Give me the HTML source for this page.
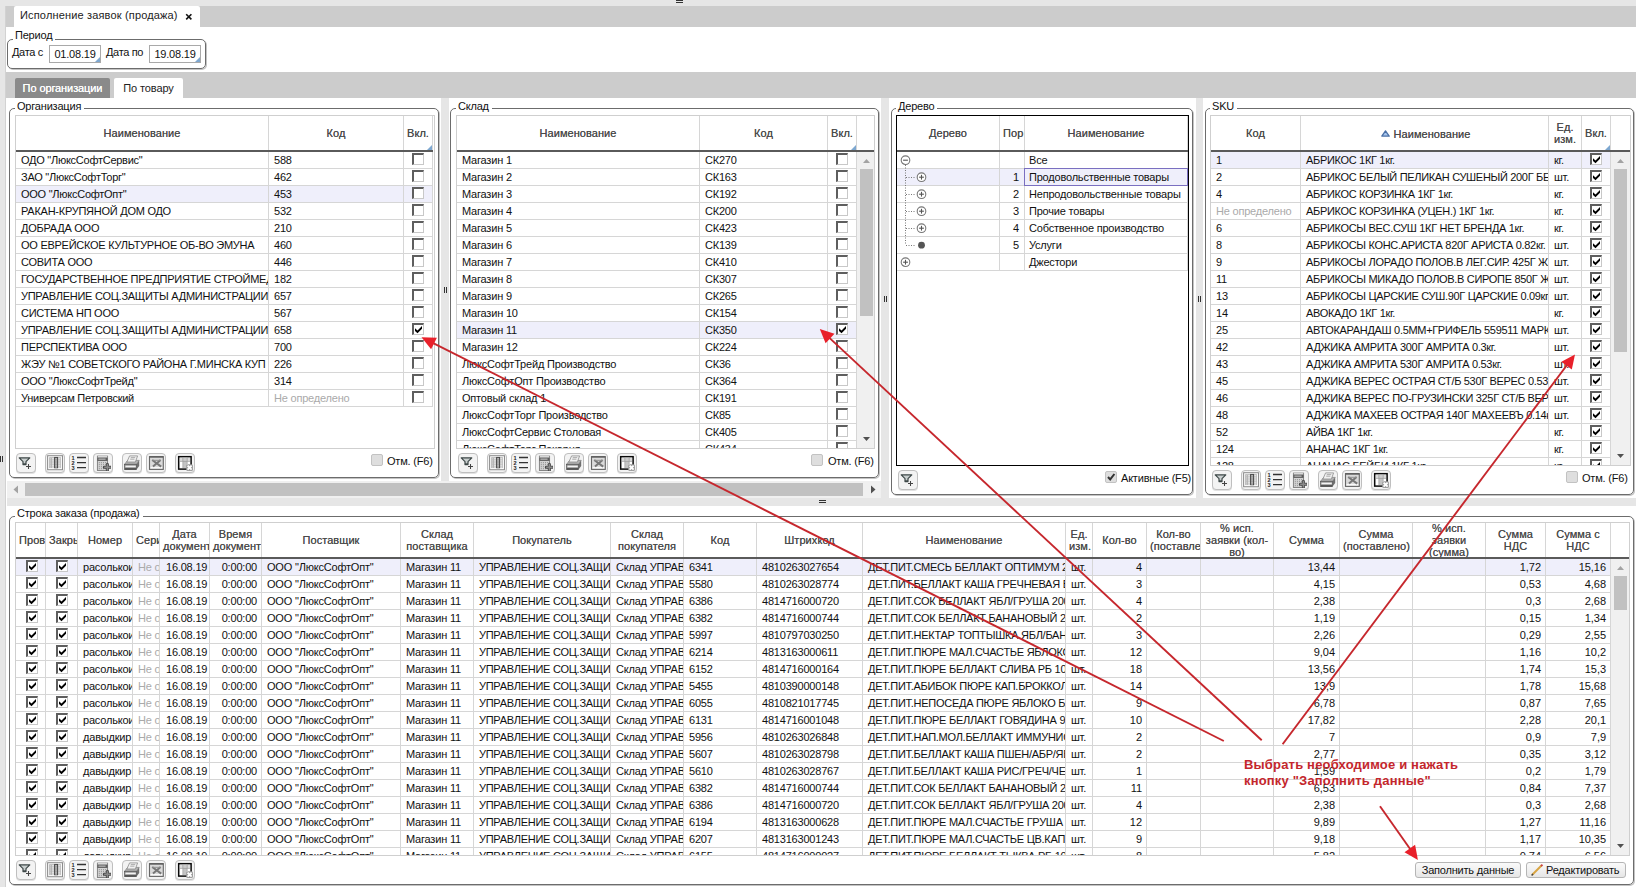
<!DOCTYPE html>
<html lang="ru"><head><meta charset="utf-8"><title>Исполнение заявок (продажа)</title>
<style>
*{box-sizing:border-box;margin:0;padding:0}
html,body{width:1636px;height:887px;overflow:hidden;background:#fff}
body{position:relative;font-family:"Liberation Sans",Arial,sans-serif;font-size:11px;color:#111;line-height:16px}
.a{position:absolute}
.fs{position:absolute;border:1px solid #6c6c6c;border-radius:5px;box-shadow:1px 1px 0 #c4c4c4}
.lg{position:absolute;background:#fff;padding:0 3px 0 2px;white-space:nowrap;line-height:14px;letter-spacing:-0.2px;color:#111}
.tb{position:absolute;border:1px solid #cfcfcf;overflow:hidden;background:#fff}
.hd{position:absolute;left:0;top:0;right:0;height:36px;border-bottom:2px solid #5a5a5a;background:#fff}
.hc{position:absolute;top:0;height:34px;border-right:1px solid #d6d6d6;color:#4a4a4a;text-align:center;display:flex;align-items:center;padding:0 3px;overflow:hidden;white-space:normal;line-height:12px;letter-spacing:0.06px;text-shadow:0 0 0.4px #666}
.hc>span{display:block;width:100%;flex:none;text-align:center}
.r{position:absolute;left:0;height:17px;border-bottom:1px solid #d6d6d6}
.r.s{background:#efeffb}
.c{position:absolute;top:0;height:16px;border-right:1px solid #d6d6d6;overflow:hidden;white-space:nowrap;padding:0 0 0 5px;letter-spacing:-0.2px;line-height:17px}
.c.n{text-align:right;padding:0 4px 0 0;letter-spacing:-0.05px}
.c.g{color:#aaa}
.cb{position:absolute;top:2px;width:12px;height:12px;background:#fff;border-top:2px solid #5e5e5e;border-left:2px solid #5e5e5e;border-right:1px solid #c8c8c8;border-bottom:1px solid #c8c8c8}
.cb svg{position:absolute;left:-1px;top:-1px;width:10px;height:10px}
.btn{position:absolute;width:20px;height:20px;border:1px solid #bfbfbf;border-radius:4px;background:#f3f3f3;box-shadow:0 1px 0 #e2e2e2}
.btn svg{position:absolute;left:1px;top:1px;width:16px;height:16px}
.rc{position:absolute;width:12px;height:12px;border:1px solid #c2c2c2;border-radius:2px;background:#dedede}
.vs{position:absolute;background:#f0f0f0}
.th{position:absolute;background:#c1c1c1}
</style></head>
<body>
<div class="a" style="left:0;top:0;width:1636px;height:6px;background:#e6e6e6"></div>
<div class="a" style="left:0;top:6px;width:6px;height:881px;background:#e6e6e6;border-right:1px solid #d2d2d2"></div>
<div class="a" style="left:6px;top:6px;width:1630px;height:21px;background:#cccccc"></div>
<div class="a" style="left:6px;top:72px;width:1630px;height:26px;background:#cccccc"></div>
<div class="a" style="left:676px;top:0;width:7px;height:1px;background:#333"></div><div class="a" style="left:676px;top:2px;width:7px;height:1px;background:#333"></div>
<div class="a" style="left:14px;top:6px;width:186px;height:21px;background:#fff;border-radius:2px 2px 0 0"></div>
<div class="a" style="left:20px;top:7px;white-space:nowrap;line-height:16px;font-size:11px;letter-spacing:0.16px;color:#222">Исполнение заявок (продажа)</div>
<svg class="a" style="left:185px;top:13px" width="8" height="8" viewBox="0 0 8 8"><path d="M1.2 1.2L6.4 6.4M6.4 1.2L1.2 6.4" stroke="#111" stroke-width="1.6"/></svg>
<div class="fs" style="left:7px;top:39px;width:199px;height:30px"></div>
<div class="lg" style="left:13px;top:28px">Период</div>
<div class="a" style="left:12px;top:44px;white-space:nowrap;letter-spacing:-0.35px">Дата с</div>
<div class="a" style="left:106px;top:44px;white-space:nowrap;letter-spacing:-0.35px">Дата по</div>
<div class="a" style="left:49px;top:45px;width:52px;height:18px;border:1px solid #a9a9a9;background:#fff;text-align:center;line-height:16px;letter-spacing:-0.2px">01.08.19<svg class="a" style="right:0;bottom:0" width="5" height="5" viewBox="0 0 5 5"><path d="M5 0V5H0Z" fill="#7da7d0"/></svg></div>
<div class="a" style="left:149px;top:45px;width:52px;height:18px;border:1px solid #a9a9a9;background:#fff;text-align:center;line-height:16px;letter-spacing:-0.2px">19.08.19<svg class="a" style="right:0;bottom:0" width="5" height="5" viewBox="0 0 5 5"><path d="M5 0V5H0Z" fill="#7da7d0"/></svg></div>
<div class="a" style="left:15px;top:78px;width:95px;height:20px;background:#8a8a8a;border-radius:2px 2px 0 0;color:#fff;text-align:center;line-height:20px;letter-spacing:-0.1px;text-shadow:0 0 0.5px #fff">По организации</div>
<div class="a" style="left:114px;top:78px;width:69px;height:20px;background:#fff;border-radius:2px 2px 0 0;color:#222;text-align:center;line-height:20px;letter-spacing:-0.1px">По товару</div>
<div class="a" style="left:441px;top:98px;width:8px;height:383px;background:#e6e6e6"></div>
<div class="a" style="left:881px;top:98px;width:8px;height:400px;background:#e6e6e6"></div>
<div class="a" style="left:1196px;top:98px;width:7px;height:400px;background:#e6e6e6"></div>
<div class="a" style="left:7px;top:498px;width:1629px;height:8px;background:#e6e6e6"></div>
<div class="a" style="left:0px;top:456px;width:1px;height:6px;background:#333"></div><div class="a" style="left:2px;top:456px;width:1px;height:6px;background:#333"></div>
<div class="a" style="left:444px;top:287px;width:1px;height:6px;background:#333"></div><div class="a" style="left:446px;top:287px;width:1px;height:6px;background:#333"></div>
<div class="a" style="left:884px;top:296px;width:1px;height:6px;background:#333"></div><div class="a" style="left:886px;top:296px;width:1px;height:6px;background:#333"></div>
<div class="a" style="left:1198px;top:296px;width:1px;height:6px;background:#333"></div><div class="a" style="left:1200px;top:296px;width:1px;height:6px;background:#333"></div>
<div class="a" style="left:819px;top:500px;width:7px;height:1px;background:#333"></div><div class="a" style="left:819px;top:502px;width:7px;height:1px;background:#333"></div>
<div class="a" style="left:7px;top:481px;width:874px;height:17px;background:#f0f0f0"></div>
<div class="a" style="left:25px;top:483px;width:838px;height:13px;background:#c1c1c1"></div>
<svg class="a" style="left:13px;top:485px" width="6" height="9" viewBox="0 0 6 9"><path d="M5 0.5V8.5L0.5 4.5Z" fill="#a3a3a3"/></svg>
<svg class="a" style="left:870px;top:485px" width="6" height="9" viewBox="0 0 6 9"><path d="M1 0.5V8.5L5.5 4.5Z" fill="#505050"/></svg>
<div class="fs" style="left:9px;top:108px;width:430px;height:370px"></div>
<div class="lg" style="left:15px;top:99px">Организация</div>
<div class="tb" style="left:15px;top:115px;width:420px;height:334px;border-color:#cfcfcf"><div class="hd" style="height:36px;right:auto;width:417px;"><div class="hc" style="left:0px;width:253px;height:34px;"><span>Наименование</span></div><div class="hc" style="left:253px;width:135px;height:34px;"><span>Код</span></div><div class="hc" style="left:388px;width:29px;height:34px;"><span>Вкл.</span><svg class="a" style="right:0;bottom:0" width="5" height="5" viewBox="0 0 5 5"><path d="M5 0V5H0Z" fill="#7da7d0"/></svg></div></div><div class="r" style="top:36px;width:417px"><div class="c" style="left:0px;width:253px;letter-spacing:-0.26px">ОДО "ЛюксСофтСервис"</div><div class="c" style="left:253px;width:135px;">588</div><div class="c" style="left:388px;width:29px;padding:0"><div class="cb" style="left:8px;top:1px"></div></div></div><div class="r" style="top:53px;width:417px"><div class="c" style="left:0px;width:253px;letter-spacing:-0.26px">ЗАО "ЛюксСофтТорг"</div><div class="c" style="left:253px;width:135px;">462</div><div class="c" style="left:388px;width:29px;padding:0"><div class="cb" style="left:8px;top:1px"></div></div></div><div class="r s" style="top:70px;width:417px"><div class="c" style="left:0px;width:253px;letter-spacing:-0.26px">ООО "ЛюксСофтОпт"</div><div class="c" style="left:253px;width:135px;">453</div><div class="c" style="left:388px;width:29px;padding:0"><div class="cb" style="left:8px;top:1px"></div></div></div><div class="r" style="top:87px;width:417px"><div class="c" style="left:0px;width:253px;letter-spacing:-0.26px">РАКАН-КРУПЯНОЙ ДОМ ОДО</div><div class="c" style="left:253px;width:135px;">532</div><div class="c" style="left:388px;width:29px;padding:0"><div class="cb" style="left:8px;top:1px"></div></div></div><div class="r" style="top:104px;width:417px"><div class="c" style="left:0px;width:253px;letter-spacing:-0.26px">ДОБРАДА ООО</div><div class="c" style="left:253px;width:135px;">210</div><div class="c" style="left:388px;width:29px;padding:0"><div class="cb" style="left:8px;top:1px"></div></div></div><div class="r" style="top:121px;width:417px"><div class="c" style="left:0px;width:253px;letter-spacing:-0.26px">ОО ЕВРЕЙСКОЕ КУЛЬТУРНОЕ ОБ-ВО ЭМУНА</div><div class="c" style="left:253px;width:135px;">460</div><div class="c" style="left:388px;width:29px;padding:0"><div class="cb" style="left:8px;top:1px"></div></div></div><div class="r" style="top:138px;width:417px"><div class="c" style="left:0px;width:253px;letter-spacing:-0.26px">СОВИТА ООО</div><div class="c" style="left:253px;width:135px;">446</div><div class="c" style="left:388px;width:29px;padding:0"><div class="cb" style="left:8px;top:1px"></div></div></div><div class="r" style="top:155px;width:417px"><div class="c" style="left:0px;width:253px;letter-spacing:-0.26px">ГОСУДАРСТВЕННОЕ ПРЕДПРИЯТИЕ СТРОЙМЕДИАПРОЕКТ</div><div class="c" style="left:253px;width:135px;">182</div><div class="c" style="left:388px;width:29px;padding:0"><div class="cb" style="left:8px;top:1px"></div></div></div><div class="r" style="top:172px;width:417px"><div class="c" style="left:0px;width:253px;letter-spacing:-0.26px">УПРАВЛЕНИЕ СОЦ.ЗАЩИТЫ АДМИНИСТРАЦИИ ЛЕНИНСКОГО РАЙОНА</div><div class="c" style="left:253px;width:135px;">657</div><div class="c" style="left:388px;width:29px;padding:0"><div class="cb" style="left:8px;top:1px"></div></div></div><div class="r" style="top:189px;width:417px"><div class="c" style="left:0px;width:253px;letter-spacing:-0.26px">СИСТЕМА НП ООО</div><div class="c" style="left:253px;width:135px;">567</div><div class="c" style="left:388px;width:29px;padding:0"><div class="cb" style="left:8px;top:1px"></div></div></div><div class="r" style="top:206px;width:417px"><div class="c" style="left:0px;width:253px;letter-spacing:-0.26px">УПРАВЛЕНИЕ СОЦ.ЗАЩИТЫ АДМИНИСТРАЦИИ СОВЕТСКОГО РАЙОНА</div><div class="c" style="left:253px;width:135px;">658</div><div class="c" style="left:388px;width:29px;padding:0"><div class="cb" style="left:8px;top:1px"><svg viewBox="0 0 10 10"><path d="M2 4.2L4.5 6.6L9 2V4.8L4.5 9.3L2 6.9Z" fill="#000"/></svg></div></div></div><div class="r" style="top:223px;width:417px"><div class="c" style="left:0px;width:253px;letter-spacing:-0.26px">ПЕРСПЕКТИВА ООО</div><div class="c" style="left:253px;width:135px;">700</div><div class="c" style="left:388px;width:29px;padding:0"><div class="cb" style="left:8px;top:1px"></div></div></div><div class="r" style="top:240px;width:417px"><div class="c" style="left:0px;width:253px;letter-spacing:-0.26px">ЖЭУ №1 СОВЕТСКОГО РАЙОНА Г.МИНСКА КУП</div><div class="c" style="left:253px;width:135px;">226</div><div class="c" style="left:388px;width:29px;padding:0"><div class="cb" style="left:8px;top:1px"></div></div></div><div class="r" style="top:257px;width:417px"><div class="c" style="left:0px;width:253px;letter-spacing:-0.26px">ООО "ЛюксСофтТрейд"</div><div class="c" style="left:253px;width:135px;">314</div><div class="c" style="left:388px;width:29px;padding:0"><div class="cb" style="left:8px;top:1px"></div></div></div><div class="r" style="top:274px;width:417px"><div class="c" style="left:0px;width:253px;letter-spacing:-0.26px">Универсам Петровский</div><div class="c g" style="left:253px;width:135px;">Не определено</div><div class="c" style="left:388px;width:29px;padding:0"><div class="cb" style="left:8px;top:1px"></div></div></div></div>
<div class="btn" style="left:16px;top:453px"><svg viewBox="0 0 16 16"><path d="M1.2 2.9H11.8L8 6.6V9.6H5V6.6Z" fill="#c9cfcf" stroke="#3d4747" stroke-width="1.2" stroke-linejoin="round"/><path d="M5 8.3H8V9.9H5Z" fill="#3d4747"/><path d="M10.5 9V13.9M8 11.45H13" stroke="#444" stroke-width="1.05"/></svg></div><div class="btn" style="left:45px;top:453px"><svg viewBox="0 0 16 16"><rect x=".6" y=".7" width="14.9" height="14" fill="#f8f8f8" stroke="#8c8c8c" stroke-width="1"/><rect x="2.2" y="2.2" width="11.7" height="10.8" fill="#b2b2b2"/><rect x="7.6" y="2.4" width="3" height="10.4" fill="#8c8c8c" stroke="#454545" stroke-width=".9"/><rect x="3" y="3.3" width="1.2" height="1.1" fill="#d8d8d8"/><rect x="5" y="3.3" width="2" height="1.1" fill="#f4f4f4"/><rect x="8.3" y="3.3" width="1.6" height="1.1" fill="#c9c9c9"/><rect x="11.3" y="3.3" width="2" height="1.1" fill="#f4f4f4"/><rect x="3" y="5.4" width="1.2" height="1.1" fill="#d8d8d8"/><rect x="5" y="5.4" width="2" height="1.1" fill="#f4f4f4"/><rect x="8.3" y="5.4" width="1.6" height="1.1" fill="#c9c9c9"/><rect x="11.3" y="5.4" width="2" height="1.1" fill="#f4f4f4"/><rect x="3" y="7.5" width="1.2" height="1.1" fill="#d8d8d8"/><rect x="5" y="7.5" width="2" height="1.1" fill="#f4f4f4"/><rect x="8.3" y="7.5" width="1.6" height="1.1" fill="#c9c9c9"/><rect x="11.3" y="7.5" width="2" height="1.1" fill="#f4f4f4"/><rect x="3" y="9.6" width="1.2" height="1.1" fill="#d8d8d8"/><rect x="5" y="9.6" width="2" height="1.1" fill="#f4f4f4"/><rect x="8.3" y="9.6" width="1.6" height="1.1" fill="#c9c9c9"/><rect x="11.3" y="9.6" width="2" height="1.1" fill="#f4f4f4"/><rect x="3" y="11.5" width="1.2" height="1.1" fill="#d8d8d8"/><rect x="5" y="11.5" width="2" height="1.1" fill="#f4f4f4"/><rect x="8.3" y="11.5" width="1.6" height="1.1" fill="#c9c9c9"/><rect x="11.3" y="11.5" width="2" height="1.1" fill="#f4f4f4"/></svg></div><div class="btn" style="left:69px;top:453px"><svg viewBox="0 0 16 16"><path d="M6 2.5H15M6 7.6H15M6 12.6H15" stroke="#333" stroke-width="1.3"/><text x="0.6" y="4.8" font-family="Liberation Sans,sans-serif" font-size="5.6" font-weight="bold" fill="#222">1</text><text x="0.6" y="9.9" font-family="Liberation Sans,sans-serif" font-size="5.6" font-weight="bold" fill="#222">2</text><text x="0.6" y="15" font-family="Liberation Sans,sans-serif" font-size="5.6" font-weight="bold" fill="#222">3</text></svg></div><div class="btn" style="left:93px;top:453px"><svg viewBox="0 0 16 16"><rect x="2.4" y="1.1" width="10.2" height="14.4" fill="#d4d4d4" stroke="#7a7a7a" stroke-width=".9"/><rect x="2.8" y="1.4" width="9.4" height="1.1" fill="#fbfbfb"/><rect x="2.4" y="2.5" width="10.2" height="3.4" fill="#5c5c5c"/><rect x="3.4" y="3.4" width="7.2" height="1.6" fill="#a4a4a4"/><rect x="3.8" y="7.2" width="1" height="1" fill="#8a8a8a"/><rect x="5.9" y="7.2" width="1" height="1" fill="#8a8a8a"/><rect x="8" y="7.2" width="1" height="1" fill="#8a8a8a"/><rect x="10.1" y="7.2" width="1" height="1" fill="#8a8a8a"/><rect x="3.8" y="9.2" width="1" height="1" fill="#8a8a8a"/><rect x="5.9" y="9.2" width="1" height="1" fill="#8a8a8a"/><rect x="8" y="9.2" width="1" height="1" fill="#8a8a8a"/><rect x="10.1" y="9.2" width="1" height="1" fill="#8a8a8a"/><rect x="3.8" y="11.2" width="1" height="1" fill="#8a8a8a"/><rect x="5.9" y="11.2" width="1" height="1" fill="#8a8a8a"/><rect x="8" y="11.2" width="1" height="1" fill="#8a8a8a"/><rect x="10.1" y="11.2" width="1" height="1" fill="#8a8a8a"/><rect x="3.8" y="13.2" width="1" height="1" fill="#8a8a8a"/><rect x="5.9" y="13.2" width="1" height="1" fill="#8a8a8a"/><rect x="8" y="13.2" width="1" height="1" fill="#8a8a8a"/><rect x="10.1" y="13.2" width="1" height="1" fill="#8a8a8a"/><path d="M12.4 9.2V15.4M9.3 12.3H15.5" stroke="#474747" stroke-width="3" stroke-linecap="round"/><path d="M12.4 9.6V15M9.7 12.3H15.1" stroke="#8a8a8a" stroke-width="1.5" stroke-linecap="round"/></svg></div><div class="btn" style="left:122px;top:453px"><svg viewBox="0 0 16 16"><path d="M.6 9.3L3.6 5.4H15.2L12.6 9.3Z" fill="#b3b3b3" stroke="#7c7c7c" stroke-width=".7"/><path d="M12.6 9.3L15.2 5.4V11L12.6 14.6Z" fill="#6f6f6f"/><rect x=".6" y="9.3" width="12" height="5.3" fill="#8b8b8b" stroke="#555" stroke-width=".7"/><rect x="1.4" y="10.6" width="10.4" height="1.7" fill="#f3f3f3"/><rect x=".9" y="13.2" width="11.4" height="1.4" fill="#4a4a4a"/><path d="M5.6 .9H13.6L11.4 7H2.9Z" fill="#f1f1f1" stroke="#8d8d8d" stroke-width=".8"/><path d="M6.8 2.6H11.2M6.2 4.2H10.4" stroke="#a4a4a4" stroke-width=".9"/></svg></div><div class="btn" style="left:146px;top:453px"><svg viewBox="0 0 16 16"><rect x="1.5" y="1.6" width="13.8" height="12.8" fill="#dadada" stroke="#666" stroke-width="1.1"/><path d="M1.5 2H15.3" stroke="#5a5a5a" stroke-width="1.3"/><rect x="2.6" y="12" width="11.6" height="1.4" fill="#fafafa"/><path d="M4.2 5L13.2 11.6M12.6 5L5 11.6" stroke="#777" stroke-width="2"/><path d="M4.5 5.3H13" stroke="#8f8f8f" stroke-width="1"/></svg></div><div class="btn" style="left:175px;top:453px"><svg viewBox="0 0 16 16"><rect x="1.7" y="1.7" width="12.4" height="12.4" fill="#fff" stroke="#0a0a0a" stroke-width="1.5"/><rect x="6" y="2.8" width="4" height="10.2" fill="#c4c4c4"/><rect x="2.8" y="2.8" width="10.2" height="3.4" fill="#cfcfcf" opacity=".75"/><path d="M5.8 2.8V13M10.2 2.8V9M2.8 6.4H13" stroke="#9a9a9a" stroke-width=".7"/><rect x="9.2" y="9.2" width="6.8" height="6.8" rx="1.6" fill="#9c9c9c"/><path d="M10.6 10.6L14.6 14.6M14.6 10.6L10.6 14.6" stroke="#fff" stroke-width="1.9"/></svg></div>
<div class="rc" style="left:371px;top:454px"></div><div class="a" style="left:387px;top:453px;white-space:nowrap;letter-spacing:-0.2px">Отм. (F6)</div>
<div class="fs" style="left:450px;top:108px;width:429px;height:370px"></div>
<div class="lg" style="left:456px;top:99px">Склад</div>
<div class="tb" style="left:456px;top:115px;width:419px;height:334px;border-color:#cfcfcf"><div class="hd" style="height:36px;"><div class="hc" style="left:0px;width:243px;height:34px;"><span>Наименование</span></div><div class="hc" style="left:243px;width:128px;height:34px;"><span>Код</span></div><div class="hc" style="left:371px;width:29px;height:34px;"><span>Вкл.</span><svg class="a" style="right:0;bottom:0" width="5" height="5" viewBox="0 0 5 5"><path d="M5 0V5H0Z" fill="#7da7d0"/></svg></div></div><div class="r" style="top:36px;width:400px"><div class="c" style="left:0px;width:243px;">Магазин 1</div><div class="c" style="left:243px;width:128px;">СК270</div><div class="c" style="left:371px;width:29px;padding:0"><div class="cb" style="left:8px;top:1px"></div></div></div><div class="r" style="top:53px;width:400px"><div class="c" style="left:0px;width:243px;">Магазин 2</div><div class="c" style="left:243px;width:128px;">СК163</div><div class="c" style="left:371px;width:29px;padding:0"><div class="cb" style="left:8px;top:1px"></div></div></div><div class="r" style="top:70px;width:400px"><div class="c" style="left:0px;width:243px;">Магазин 3</div><div class="c" style="left:243px;width:128px;">СК192</div><div class="c" style="left:371px;width:29px;padding:0"><div class="cb" style="left:8px;top:1px"></div></div></div><div class="r" style="top:87px;width:400px"><div class="c" style="left:0px;width:243px;">Магазин 4</div><div class="c" style="left:243px;width:128px;">СК200</div><div class="c" style="left:371px;width:29px;padding:0"><div class="cb" style="left:8px;top:1px"></div></div></div><div class="r" style="top:104px;width:400px"><div class="c" style="left:0px;width:243px;">Магазин 5</div><div class="c" style="left:243px;width:128px;">СК423</div><div class="c" style="left:371px;width:29px;padding:0"><div class="cb" style="left:8px;top:1px"></div></div></div><div class="r" style="top:121px;width:400px"><div class="c" style="left:0px;width:243px;">Магазин 6</div><div class="c" style="left:243px;width:128px;">СК139</div><div class="c" style="left:371px;width:29px;padding:0"><div class="cb" style="left:8px;top:1px"></div></div></div><div class="r" style="top:138px;width:400px"><div class="c" style="left:0px;width:243px;">Магазин 7</div><div class="c" style="left:243px;width:128px;">СК410</div><div class="c" style="left:371px;width:29px;padding:0"><div class="cb" style="left:8px;top:1px"></div></div></div><div class="r" style="top:155px;width:400px"><div class="c" style="left:0px;width:243px;">Магазин 8</div><div class="c" style="left:243px;width:128px;">СК307</div><div class="c" style="left:371px;width:29px;padding:0"><div class="cb" style="left:8px;top:1px"></div></div></div><div class="r" style="top:172px;width:400px"><div class="c" style="left:0px;width:243px;">Магазин 9</div><div class="c" style="left:243px;width:128px;">СК265</div><div class="c" style="left:371px;width:29px;padding:0"><div class="cb" style="left:8px;top:1px"></div></div></div><div class="r" style="top:189px;width:400px"><div class="c" style="left:0px;width:243px;">Магазин 10</div><div class="c" style="left:243px;width:128px;">СК154</div><div class="c" style="left:371px;width:29px;padding:0"><div class="cb" style="left:8px;top:1px"></div></div></div><div class="r s" style="top:206px;width:400px"><div class="c" style="left:0px;width:243px;">Магазин 11</div><div class="c" style="left:243px;width:128px;">СК350</div><div class="c" style="left:371px;width:29px;padding:0"><div class="cb" style="left:8px;top:1px"><svg viewBox="0 0 10 10"><path d="M2 4.2L4.5 6.6L9 2V4.8L4.5 9.3L2 6.9Z" fill="#000"/></svg></div></div></div><div class="r" style="top:223px;width:400px"><div class="c" style="left:0px;width:243px;">Магазин 12</div><div class="c" style="left:243px;width:128px;">СК224</div><div class="c" style="left:371px;width:29px;padding:0"><div class="cb" style="left:8px;top:1px"></div></div></div><div class="r" style="top:240px;width:400px"><div class="c" style="left:0px;width:243px;">ЛюксСофтТрейд Производство</div><div class="c" style="left:243px;width:128px;">СК36</div><div class="c" style="left:371px;width:29px;padding:0"><div class="cb" style="left:8px;top:1px"></div></div></div><div class="r" style="top:257px;width:400px"><div class="c" style="left:0px;width:243px;">ЛюксСофтОпт Производство</div><div class="c" style="left:243px;width:128px;">СК364</div><div class="c" style="left:371px;width:29px;padding:0"><div class="cb" style="left:8px;top:1px"></div></div></div><div class="r" style="top:274px;width:400px"><div class="c" style="left:0px;width:243px;">Оптовый склад 1</div><div class="c" style="left:243px;width:128px;">СК191</div><div class="c" style="left:371px;width:29px;padding:0"><div class="cb" style="left:8px;top:1px"></div></div></div><div class="r" style="top:291px;width:400px"><div class="c" style="left:0px;width:243px;">ЛюксСофтТорг Производство</div><div class="c" style="left:243px;width:128px;">СК85</div><div class="c" style="left:371px;width:29px;padding:0"><div class="cb" style="left:8px;top:1px"></div></div></div><div class="r" style="top:308px;width:400px"><div class="c" style="left:0px;width:243px;">ЛюксСофтСервис Столовая</div><div class="c" style="left:243px;width:128px;">СК405</div><div class="c" style="left:371px;width:29px;padding:0"><div class="cb" style="left:8px;top:1px"></div></div></div><div class="r" style="top:325px;width:400px"><div class="c" style="left:0px;width:243px;">ЛюксСофтТорг Пекарня</div><div class="c" style="left:243px;width:128px;">СК434</div><div class="c" style="left:371px;width:29px;padding:0"><div class="cb" style="left:8px;top:1px"></div></div></div><div class="vs" style="left:400px;top:36px;width:17px;bottom:0"></div><div class="th" style="left:403px;top:53px;width:13px;height:147px"></div><svg class="a" style="left:406px;top:43px" width="7" height="4" viewBox="0 0 7 4"><path d="M0 4H7L3.5 0Z" fill="#a3a3a3"/></svg><svg class="a" style="left:406px;top:321px" width="7" height="4" viewBox="0 0 7 4"><path d="M0 0H7L3.5 4Z" fill="#505050"/></svg></div>
<div class="btn" style="left:458px;top:453px"><svg viewBox="0 0 16 16"><path d="M1.2 2.9H11.8L8 6.6V9.6H5V6.6Z" fill="#c9cfcf" stroke="#3d4747" stroke-width="1.2" stroke-linejoin="round"/><path d="M5 8.3H8V9.9H5Z" fill="#3d4747"/><path d="M10.5 9V13.9M8 11.45H13" stroke="#444" stroke-width="1.05"/></svg></div><div class="btn" style="left:487px;top:453px"><svg viewBox="0 0 16 16"><rect x=".6" y=".7" width="14.9" height="14" fill="#f8f8f8" stroke="#8c8c8c" stroke-width="1"/><rect x="2.2" y="2.2" width="11.7" height="10.8" fill="#b2b2b2"/><rect x="7.6" y="2.4" width="3" height="10.4" fill="#8c8c8c" stroke="#454545" stroke-width=".9"/><rect x="3" y="3.3" width="1.2" height="1.1" fill="#d8d8d8"/><rect x="5" y="3.3" width="2" height="1.1" fill="#f4f4f4"/><rect x="8.3" y="3.3" width="1.6" height="1.1" fill="#c9c9c9"/><rect x="11.3" y="3.3" width="2" height="1.1" fill="#f4f4f4"/><rect x="3" y="5.4" width="1.2" height="1.1" fill="#d8d8d8"/><rect x="5" y="5.4" width="2" height="1.1" fill="#f4f4f4"/><rect x="8.3" y="5.4" width="1.6" height="1.1" fill="#c9c9c9"/><rect x="11.3" y="5.4" width="2" height="1.1" fill="#f4f4f4"/><rect x="3" y="7.5" width="1.2" height="1.1" fill="#d8d8d8"/><rect x="5" y="7.5" width="2" height="1.1" fill="#f4f4f4"/><rect x="8.3" y="7.5" width="1.6" height="1.1" fill="#c9c9c9"/><rect x="11.3" y="7.5" width="2" height="1.1" fill="#f4f4f4"/><rect x="3" y="9.6" width="1.2" height="1.1" fill="#d8d8d8"/><rect x="5" y="9.6" width="2" height="1.1" fill="#f4f4f4"/><rect x="8.3" y="9.6" width="1.6" height="1.1" fill="#c9c9c9"/><rect x="11.3" y="9.6" width="2" height="1.1" fill="#f4f4f4"/><rect x="3" y="11.5" width="1.2" height="1.1" fill="#d8d8d8"/><rect x="5" y="11.5" width="2" height="1.1" fill="#f4f4f4"/><rect x="8.3" y="11.5" width="1.6" height="1.1" fill="#c9c9c9"/><rect x="11.3" y="11.5" width="2" height="1.1" fill="#f4f4f4"/></svg></div><div class="btn" style="left:511px;top:453px"><svg viewBox="0 0 16 16"><path d="M6 2.5H15M6 7.6H15M6 12.6H15" stroke="#333" stroke-width="1.3"/><text x="0.6" y="4.8" font-family="Liberation Sans,sans-serif" font-size="5.6" font-weight="bold" fill="#222">1</text><text x="0.6" y="9.9" font-family="Liberation Sans,sans-serif" font-size="5.6" font-weight="bold" fill="#222">2</text><text x="0.6" y="15" font-family="Liberation Sans,sans-serif" font-size="5.6" font-weight="bold" fill="#222">3</text></svg></div><div class="btn" style="left:535px;top:453px"><svg viewBox="0 0 16 16"><rect x="2.4" y="1.1" width="10.2" height="14.4" fill="#d4d4d4" stroke="#7a7a7a" stroke-width=".9"/><rect x="2.8" y="1.4" width="9.4" height="1.1" fill="#fbfbfb"/><rect x="2.4" y="2.5" width="10.2" height="3.4" fill="#5c5c5c"/><rect x="3.4" y="3.4" width="7.2" height="1.6" fill="#a4a4a4"/><rect x="3.8" y="7.2" width="1" height="1" fill="#8a8a8a"/><rect x="5.9" y="7.2" width="1" height="1" fill="#8a8a8a"/><rect x="8" y="7.2" width="1" height="1" fill="#8a8a8a"/><rect x="10.1" y="7.2" width="1" height="1" fill="#8a8a8a"/><rect x="3.8" y="9.2" width="1" height="1" fill="#8a8a8a"/><rect x="5.9" y="9.2" width="1" height="1" fill="#8a8a8a"/><rect x="8" y="9.2" width="1" height="1" fill="#8a8a8a"/><rect x="10.1" y="9.2" width="1" height="1" fill="#8a8a8a"/><rect x="3.8" y="11.2" width="1" height="1" fill="#8a8a8a"/><rect x="5.9" y="11.2" width="1" height="1" fill="#8a8a8a"/><rect x="8" y="11.2" width="1" height="1" fill="#8a8a8a"/><rect x="10.1" y="11.2" width="1" height="1" fill="#8a8a8a"/><rect x="3.8" y="13.2" width="1" height="1" fill="#8a8a8a"/><rect x="5.9" y="13.2" width="1" height="1" fill="#8a8a8a"/><rect x="8" y="13.2" width="1" height="1" fill="#8a8a8a"/><rect x="10.1" y="13.2" width="1" height="1" fill="#8a8a8a"/><path d="M12.4 9.2V15.4M9.3 12.3H15.5" stroke="#474747" stroke-width="3" stroke-linecap="round"/><path d="M12.4 9.6V15M9.7 12.3H15.1" stroke="#8a8a8a" stroke-width="1.5" stroke-linecap="round"/></svg></div><div class="btn" style="left:564px;top:453px"><svg viewBox="0 0 16 16"><path d="M.6 9.3L3.6 5.4H15.2L12.6 9.3Z" fill="#b3b3b3" stroke="#7c7c7c" stroke-width=".7"/><path d="M12.6 9.3L15.2 5.4V11L12.6 14.6Z" fill="#6f6f6f"/><rect x=".6" y="9.3" width="12" height="5.3" fill="#8b8b8b" stroke="#555" stroke-width=".7"/><rect x="1.4" y="10.6" width="10.4" height="1.7" fill="#f3f3f3"/><rect x=".9" y="13.2" width="11.4" height="1.4" fill="#4a4a4a"/><path d="M5.6 .9H13.6L11.4 7H2.9Z" fill="#f1f1f1" stroke="#8d8d8d" stroke-width=".8"/><path d="M6.8 2.6H11.2M6.2 4.2H10.4" stroke="#a4a4a4" stroke-width=".9"/></svg></div><div class="btn" style="left:588px;top:453px"><svg viewBox="0 0 16 16"><rect x="1.5" y="1.6" width="13.8" height="12.8" fill="#dadada" stroke="#666" stroke-width="1.1"/><path d="M1.5 2H15.3" stroke="#5a5a5a" stroke-width="1.3"/><rect x="2.6" y="12" width="11.6" height="1.4" fill="#fafafa"/><path d="M4.2 5L13.2 11.6M12.6 5L5 11.6" stroke="#777" stroke-width="2"/><path d="M4.5 5.3H13" stroke="#8f8f8f" stroke-width="1"/></svg></div><div class="btn" style="left:617px;top:453px"><svg viewBox="0 0 16 16"><rect x="1.7" y="1.7" width="12.4" height="12.4" fill="#fff" stroke="#0a0a0a" stroke-width="1.5"/><rect x="6" y="2.8" width="4" height="10.2" fill="#c4c4c4"/><rect x="2.8" y="2.8" width="10.2" height="3.4" fill="#cfcfcf" opacity=".75"/><path d="M5.8 2.8V13M10.2 2.8V9M2.8 6.4H13" stroke="#9a9a9a" stroke-width=".7"/><rect x="9.2" y="9.2" width="6.8" height="6.8" rx="1.6" fill="#9c9c9c"/><path d="M10.6 10.6L14.6 14.6M14.6 10.6L10.6 14.6" stroke="#fff" stroke-width="1.9"/></svg></div>
<div class="rc" style="left:811px;top:454px"></div><div class="a" style="left:828px;top:453px;white-space:nowrap;letter-spacing:-0.2px">Отм. (F6)</div>
<div class="fs" style="left:891px;top:108px;width:302px;height:387px"></div>
<div class="lg" style="left:896px;top:99px">Дерево</div>
<div class="tb" style="left:896px;top:115px;width:293px;height:351px;border-color:#000"><div class="hd" style="height:36px;"><div class="hc" style="left:0px;width:103px;height:34px;"><span>Дерево</span></div><div class="hc" style="left:103px;width:25px;height:34px;"><span>Пор</span></div><div class="hc" style="left:128px;width:163px;height:34px;"><span>Наименование</span></div></div><div class="r" style="top:36px;width:291px"><div class="c" style="left:0px;width:103px;"></div><div class="c n" style="left:103px;width:25px;padding-right:5px"></div><div class="c" style="left:128px;width:163px;padding-left:4px">Все</div></div><div class="r s" style="top:53px;width:291px"><div class="c" style="left:0px;width:103px;"></div><div class="c x n" style="left:103px;width:25px;padding-right:5px">1</div><div class="c" style="left:128px;width:163px;padding-left:4px">Продовольственные товары</div></div><div class="r" style="top:70px;width:291px"><div class="c" style="left:0px;width:103px;"></div><div class="c n" style="left:103px;width:25px;padding-right:5px">2</div><div class="c" style="left:128px;width:163px;padding-left:4px">Непродовольственные товары</div></div><div class="r" style="top:87px;width:291px"><div class="c" style="left:0px;width:103px;"></div><div class="c n" style="left:103px;width:25px;padding-right:5px">3</div><div class="c" style="left:128px;width:163px;padding-left:4px">Прочие товары</div></div><div class="r" style="top:104px;width:291px"><div class="c" style="left:0px;width:103px;"></div><div class="c n" style="left:103px;width:25px;padding-right:5px">4</div><div class="c" style="left:128px;width:163px;padding-left:4px">Собственное производство</div></div><div class="r" style="top:121px;width:291px"><div class="c" style="left:0px;width:103px;"></div><div class="c n" style="left:103px;width:25px;padding-right:5px">5</div><div class="c" style="left:128px;width:163px;padding-left:4px">Услуги</div></div><div class="r" style="top:138px;width:291px"><div class="c" style="left:0px;width:103px;"></div><div class="c n" style="left:103px;width:25px;padding-right:5px"></div><div class="c" style="left:128px;width:163px;padding-left:4px">Джестори</div></div><svg class="a" style="left:0;top:36px;pointer-events:none" width="110" height="130" viewBox="0 0 110 130"><path d="M8.5 13V93" stroke="#777" stroke-width="1" stroke-dasharray="1 1.5"/><path d="M9 25.5H18" stroke="#777" stroke-width="1" stroke-dasharray="1 1.5"/><path d="M9 42.5H18" stroke="#777" stroke-width="1" stroke-dasharray="1 1.5"/><path d="M9 59.5H18" stroke="#777" stroke-width="1" stroke-dasharray="1 1.5"/><path d="M9 76.5H18" stroke="#777" stroke-width="1" stroke-dasharray="1 1.5"/><path d="M9 93.5H18" stroke="#777" stroke-width="1" stroke-dasharray="1 1.5"/><circle cx="8.5" cy="8.2" r="4.3" fill="#fff" stroke="#777" stroke-width="1.1"/><path d="M6.1 8.2H10.9" stroke="#555" stroke-width="1.1"/><circle cx="24.5" cy="25.2" r="4.3" fill="#fff" stroke="#777" stroke-width="1.1"/><path d="M22.1 25.2H26.9" stroke="#555" stroke-width="1.1"/><path d="M24.5 22.8V27.599999999999998" stroke="#555" stroke-width="1.1"/><circle cx="24.5" cy="42.2" r="4.3" fill="#fff" stroke="#777" stroke-width="1.1"/><path d="M22.1 42.2H26.9" stroke="#555" stroke-width="1.1"/><path d="M24.5 39.800000000000004V44.6" stroke="#555" stroke-width="1.1"/><circle cx="24.5" cy="59.2" r="4.3" fill="#fff" stroke="#777" stroke-width="1.1"/><path d="M22.1 59.2H26.9" stroke="#555" stroke-width="1.1"/><path d="M24.5 56.800000000000004V61.6" stroke="#555" stroke-width="1.1"/><circle cx="24.5" cy="76.2" r="4.3" fill="#fff" stroke="#777" stroke-width="1.1"/><path d="M22.1 76.2H26.9" stroke="#555" stroke-width="1.1"/><path d="M24.5 73.8V78.60000000000001" stroke="#555" stroke-width="1.1"/><circle cx="24.5" cy="93.2" r="3.4" fill="#555"/><circle cx="8.5" cy="110.2" r="4.3" fill="#fff" stroke="#777" stroke-width="1.1"/><path d="M6.1 110.2H10.9" stroke="#555" stroke-width="1.1"/><path d="M8.5 107.8V112.60000000000001" stroke="#555" stroke-width="1.1"/></svg><div class="a" style="left:127px;top:52px;width:164px;height:18px;border:1px solid #7a6fc0"></div></div>
<div class="btn" style="left:898px;top:470px"><svg viewBox="0 0 16 16"><path d="M1.2 2.9H11.8L8 6.6V9.6H5V6.6Z" fill="#c9cfcf" stroke="#3d4747" stroke-width="1.2" stroke-linejoin="round"/><path d="M5 8.3H8V9.9H5Z" fill="#3d4747"/><path d="M10.5 9V13.9M8 11.45H13" stroke="#444" stroke-width="1.05"/></svg></div>
<div class="rc" style="left:1105px;top:471px"><svg class="a" style="left:0;top:0" width="10" height="10" viewBox="0 0 10 10"><path d="M2 5L4.2 7.4L8.4 2" fill="none" stroke="#333" stroke-width="2"/></svg></div><div class="a" style="left:1121px;top:470px;white-space:nowrap;letter-spacing:-0.2px">Активные (F5)</div>
<div class="fs" style="left:1205px;top:108px;width:429px;height:387px"></div>
<div class="lg" style="left:1210px;top:99px">SKU</div>
<div class="tb" style="left:1210px;top:115px;width:421px;height:351px;border-color:#cfcfcf"><div class="hd" style="height:36px;"><div class="hc" style="left:0px;width:90px;height:34px;"><span>Код</span></div><div class="hc" style="left:90px;width:248px;height:34px;padding-left:5px;padding-top:2px"><span><svg width="9" height="7" viewBox="0 0 9 7" style="margin-right:4px;vertical-align:1px"><path d="M4.5 0.9L8.2 6.1H0.8Z" fill="#a6c6ef" stroke="#4a6fa5" stroke-width="1.3" stroke-linejoin="round"/></svg>Наименование</span></div><div class="hc w" style="left:338px;width:33px;height:34px;"><span>Ед.<br>изм.</span></div><div class="hc" style="left:371px;width:29px;height:34px;"><span>Вкл.</span><svg class="a" style="right:0;bottom:0" width="5" height="5" viewBox="0 0 5 5"><path d="M5 0V5H0Z" fill="#7da7d0"/></svg></div></div><div class="r s" style="top:36px;width:400px"><div class="c" style="left:0px;width:90px;">1</div><div class="c" style="left:90px;width:248px;letter-spacing:-0.32px">АБРИКОС 1КГ 1кг.</div><div class="c" style="left:338px;width:33px;">кг.</div><div class="c" style="left:371px;width:29px;padding:0"><div class="cb" style="left:8px;top:1px"><svg viewBox="0 0 10 10"><path d="M2 4.2L4.5 6.6L9 2V4.8L4.5 9.3L2 6.9Z" fill="#000"/></svg></div></div></div><div class="r" style="top:53px;width:400px"><div class="c" style="left:0px;width:90px;">2</div><div class="c" style="left:90px;width:248px;letter-spacing:-0.32px">АБРИКОС БЕЛЫЙ ПЕЛИКАН СУШЕНЫЙ 200Г БЕЛЫЙ ПЕЛИКАН</div><div class="c" style="left:338px;width:33px;">шт.</div><div class="c" style="left:371px;width:29px;padding:0"><div class="cb" style="left:8px;top:1px"><svg viewBox="0 0 10 10"><path d="M2 4.2L4.5 6.6L9 2V4.8L4.5 9.3L2 6.9Z" fill="#000"/></svg></div></div></div><div class="r" style="top:70px;width:400px"><div class="c" style="left:0px;width:90px;">4</div><div class="c" style="left:90px;width:248px;letter-spacing:-0.32px">АБРИКОС КОРЗИНКА 1КГ 1кг.</div><div class="c" style="left:338px;width:33px;">кг.</div><div class="c" style="left:371px;width:29px;padding:0"><div class="cb" style="left:8px;top:1px"><svg viewBox="0 0 10 10"><path d="M2 4.2L4.5 6.6L9 2V4.8L4.5 9.3L2 6.9Z" fill="#000"/></svg></div></div></div><div class="r" style="top:87px;width:400px"><div class="c g" style="left:0px;width:90px;">Не определено</div><div class="c" style="left:90px;width:248px;letter-spacing:-0.32px">АБРИКОС КОРЗИНКА (УЦЕН.) 1КГ 1кг.</div><div class="c" style="left:338px;width:33px;">кг.</div><div class="c" style="left:371px;width:29px;padding:0"><div class="cb" style="left:8px;top:1px"><svg viewBox="0 0 10 10"><path d="M2 4.2L4.5 6.6L9 2V4.8L4.5 9.3L2 6.9Z" fill="#000"/></svg></div></div></div><div class="r" style="top:104px;width:400px"><div class="c" style="left:0px;width:90px;">6</div><div class="c" style="left:90px;width:248px;letter-spacing:-0.32px">АБРИКОСЫ ВЕС.СУШ 1КГ НЕТ БРЕНДА 1кг.</div><div class="c" style="left:338px;width:33px;">кг.</div><div class="c" style="left:371px;width:29px;padding:0"><div class="cb" style="left:8px;top:1px"><svg viewBox="0 0 10 10"><path d="M2 4.2L4.5 6.6L9 2V4.8L4.5 9.3L2 6.9Z" fill="#000"/></svg></div></div></div><div class="r" style="top:121px;width:400px"><div class="c" style="left:0px;width:90px;">8</div><div class="c" style="left:90px;width:248px;letter-spacing:-0.32px">АБРИКОСЫ КОНС.АРИСТА 820Г АРИСТА 0.82кг.</div><div class="c" style="left:338px;width:33px;">шт.</div><div class="c" style="left:371px;width:29px;padding:0"><div class="cb" style="left:8px;top:1px"><svg viewBox="0 0 10 10"><path d="M2 4.2L4.5 6.6L9 2V4.8L4.5 9.3L2 6.9Z" fill="#000"/></svg></div></div></div><div class="r" style="top:138px;width:400px"><div class="c" style="left:0px;width:90px;">9</div><div class="c" style="left:90px;width:248px;letter-spacing:-0.32px">АБРИКОСЫ ЛОРАДО ПОЛОВ.В ЛЕГ.СИР. 425Г Ж/Б</div><div class="c" style="left:338px;width:33px;">шт.</div><div class="c" style="left:371px;width:29px;padding:0"><div class="cb" style="left:8px;top:1px"><svg viewBox="0 0 10 10"><path d="M2 4.2L4.5 6.6L9 2V4.8L4.5 9.3L2 6.9Z" fill="#000"/></svg></div></div></div><div class="r" style="top:155px;width:400px"><div class="c" style="left:0px;width:90px;">11</div><div class="c" style="left:90px;width:248px;letter-spacing:-0.32px">АБРИКОСЫ МИКАДО ПОЛОВ.В СИРОПЕ 850Г Ж/Б</div><div class="c" style="left:338px;width:33px;">шт.</div><div class="c" style="left:371px;width:29px;padding:0"><div class="cb" style="left:8px;top:1px"><svg viewBox="0 0 10 10"><path d="M2 4.2L4.5 6.6L9 2V4.8L4.5 9.3L2 6.9Z" fill="#000"/></svg></div></div></div><div class="r" style="top:172px;width:400px"><div class="c" style="left:0px;width:90px;">13</div><div class="c" style="left:90px;width:248px;letter-spacing:-0.32px">АБРИКОСЫ ЦАРСКИЕ СУШ.90Г ЦАРСКИЕ 0.09кг.</div><div class="c" style="left:338px;width:33px;">шт.</div><div class="c" style="left:371px;width:29px;padding:0"><div class="cb" style="left:8px;top:1px"><svg viewBox="0 0 10 10"><path d="M2 4.2L4.5 6.6L9 2V4.8L4.5 9.3L2 6.9Z" fill="#000"/></svg></div></div></div><div class="r" style="top:189px;width:400px"><div class="c" style="left:0px;width:90px;">14</div><div class="c" style="left:90px;width:248px;letter-spacing:-0.32px">АВОКАДО 1КГ 1кг.</div><div class="c" style="left:338px;width:33px;">кг.</div><div class="c" style="left:371px;width:29px;padding:0"><div class="cb" style="left:8px;top:1px"><svg viewBox="0 0 10 10"><path d="M2 4.2L4.5 6.6L9 2V4.8L4.5 9.3L2 6.9Z" fill="#000"/></svg></div></div></div><div class="r" style="top:206px;width:400px"><div class="c" style="left:0px;width:90px;">25</div><div class="c" style="left:90px;width:248px;letter-spacing:-0.32px">АВТОКАРАНДАШ 0.5ММ+ГРИФЕЛЬ 559511 МАРКО</div><div class="c" style="left:338px;width:33px;">шт.</div><div class="c" style="left:371px;width:29px;padding:0"><div class="cb" style="left:8px;top:1px"><svg viewBox="0 0 10 10"><path d="M2 4.2L4.5 6.6L9 2V4.8L4.5 9.3L2 6.9Z" fill="#000"/></svg></div></div></div><div class="r" style="top:223px;width:400px"><div class="c" style="left:0px;width:90px;">42</div><div class="c" style="left:90px;width:248px;letter-spacing:-0.32px">АДЖИКА АМРИТА 300Г АМРИТА 0.3кг.</div><div class="c" style="left:338px;width:33px;">шт.</div><div class="c" style="left:371px;width:29px;padding:0"><div class="cb" style="left:8px;top:1px"><svg viewBox="0 0 10 10"><path d="M2 4.2L4.5 6.6L9 2V4.8L4.5 9.3L2 6.9Z" fill="#000"/></svg></div></div></div><div class="r" style="top:240px;width:400px"><div class="c" style="left:0px;width:90px;">43</div><div class="c" style="left:90px;width:248px;letter-spacing:-0.32px">АДЖИКА АМРИТА 530Г АМРИТА 0.53кг.</div><div class="c" style="left:338px;width:33px;">шт.</div><div class="c" style="left:371px;width:29px;padding:0"><div class="cb" style="left:8px;top:1px"><svg viewBox="0 0 10 10"><path d="M2 4.2L4.5 6.6L9 2V4.8L4.5 9.3L2 6.9Z" fill="#000"/></svg></div></div></div><div class="r" style="top:257px;width:400px"><div class="c" style="left:0px;width:90px;">45</div><div class="c" style="left:90px;width:248px;letter-spacing:-0.32px">АДЖИКА ВЕРЕС ОСТРАЯ СТ/Б 530Г ВЕРЕС 0.53кг.</div><div class="c" style="left:338px;width:33px;">шт.</div><div class="c" style="left:371px;width:29px;padding:0"><div class="cb" style="left:8px;top:1px"><svg viewBox="0 0 10 10"><path d="M2 4.2L4.5 6.6L9 2V4.8L4.5 9.3L2 6.9Z" fill="#000"/></svg></div></div></div><div class="r" style="top:274px;width:400px"><div class="c" style="left:0px;width:90px;">46</div><div class="c" style="left:90px;width:248px;letter-spacing:-0.32px">АДЖИКА ВЕРЕС ПО-ГРУЗИНСКИ 325Г СТ/Б ВЕРЕС</div><div class="c" style="left:338px;width:33px;">шт.</div><div class="c" style="left:371px;width:29px;padding:0"><div class="cb" style="left:8px;top:1px"><svg viewBox="0 0 10 10"><path d="M2 4.2L4.5 6.6L9 2V4.8L4.5 9.3L2 6.9Z" fill="#000"/></svg></div></div></div><div class="r" style="top:291px;width:400px"><div class="c" style="left:0px;width:90px;">48</div><div class="c" style="left:90px;width:248px;letter-spacing:-0.32px">АДЖИКА МАХЕЕВ ОСТРАЯ 140Г МАХЕЕВЪ 0.14кг.</div><div class="c" style="left:338px;width:33px;">шт.</div><div class="c" style="left:371px;width:29px;padding:0"><div class="cb" style="left:8px;top:1px"><svg viewBox="0 0 10 10"><path d="M2 4.2L4.5 6.6L9 2V4.8L4.5 9.3L2 6.9Z" fill="#000"/></svg></div></div></div><div class="r" style="top:308px;width:400px"><div class="c" style="left:0px;width:90px;">52</div><div class="c" style="left:90px;width:248px;letter-spacing:-0.32px">АЙВА 1КГ 1кг.</div><div class="c" style="left:338px;width:33px;">кг.</div><div class="c" style="left:371px;width:29px;padding:0"><div class="cb" style="left:8px;top:1px"><svg viewBox="0 0 10 10"><path d="M2 4.2L4.5 6.6L9 2V4.8L4.5 9.3L2 6.9Z" fill="#000"/></svg></div></div></div><div class="r" style="top:325px;width:400px"><div class="c" style="left:0px;width:90px;">124</div><div class="c" style="left:90px;width:248px;letter-spacing:-0.32px">АНАНАС 1КГ 1кг.</div><div class="c" style="left:338px;width:33px;">кг.</div><div class="c" style="left:371px;width:29px;padding:0"><div class="cb" style="left:8px;top:1px"><svg viewBox="0 0 10 10"><path d="M2 4.2L4.5 6.6L9 2V4.8L4.5 9.3L2 6.9Z" fill="#000"/></svg></div></div></div><div class="r" style="top:342px;width:400px"><div class="c" style="left:0px;width:90px;">128</div><div class="c" style="left:90px;width:248px;letter-spacing:-0.32px">АНАНАС БЕЙБИ 1КГ 1кг.</div><div class="c" style="left:338px;width:33px;">кг.</div><div class="c" style="left:371px;width:29px;padding:0"><div class="cb" style="left:8px;top:1px"><svg viewBox="0 0 10 10"><path d="M2 4.2L4.5 6.6L9 2V4.8L4.5 9.3L2 6.9Z" fill="#000"/></svg></div></div></div><div class="vs" style="left:400px;top:36px;width:19px;bottom:0"></div><div class="th" style="left:403px;top:53px;width:13px;height:183px"></div><svg class="a" style="left:406px;top:43px" width="7" height="4" viewBox="0 0 7 4"><path d="M0 4H7L3.5 0Z" fill="#a3a3a3"/></svg><svg class="a" style="left:406px;top:338px" width="7" height="4" viewBox="0 0 7 4"><path d="M0 0H7L3.5 4Z" fill="#505050"/></svg></div>
<div class="btn" style="left:1212px;top:470px"><svg viewBox="0 0 16 16"><path d="M1.2 2.9H11.8L8 6.6V9.6H5V6.6Z" fill="#c9cfcf" stroke="#3d4747" stroke-width="1.2" stroke-linejoin="round"/><path d="M5 8.3H8V9.9H5Z" fill="#3d4747"/><path d="M10.5 9V13.9M8 11.45H13" stroke="#444" stroke-width="1.05"/></svg></div><div class="btn" style="left:1241px;top:470px"><svg viewBox="0 0 16 16"><rect x=".6" y=".7" width="14.9" height="14" fill="#f8f8f8" stroke="#8c8c8c" stroke-width="1"/><rect x="2.2" y="2.2" width="11.7" height="10.8" fill="#b2b2b2"/><rect x="7.6" y="2.4" width="3" height="10.4" fill="#8c8c8c" stroke="#454545" stroke-width=".9"/><rect x="3" y="3.3" width="1.2" height="1.1" fill="#d8d8d8"/><rect x="5" y="3.3" width="2" height="1.1" fill="#f4f4f4"/><rect x="8.3" y="3.3" width="1.6" height="1.1" fill="#c9c9c9"/><rect x="11.3" y="3.3" width="2" height="1.1" fill="#f4f4f4"/><rect x="3" y="5.4" width="1.2" height="1.1" fill="#d8d8d8"/><rect x="5" y="5.4" width="2" height="1.1" fill="#f4f4f4"/><rect x="8.3" y="5.4" width="1.6" height="1.1" fill="#c9c9c9"/><rect x="11.3" y="5.4" width="2" height="1.1" fill="#f4f4f4"/><rect x="3" y="7.5" width="1.2" height="1.1" fill="#d8d8d8"/><rect x="5" y="7.5" width="2" height="1.1" fill="#f4f4f4"/><rect x="8.3" y="7.5" width="1.6" height="1.1" fill="#c9c9c9"/><rect x="11.3" y="7.5" width="2" height="1.1" fill="#f4f4f4"/><rect x="3" y="9.6" width="1.2" height="1.1" fill="#d8d8d8"/><rect x="5" y="9.6" width="2" height="1.1" fill="#f4f4f4"/><rect x="8.3" y="9.6" width="1.6" height="1.1" fill="#c9c9c9"/><rect x="11.3" y="9.6" width="2" height="1.1" fill="#f4f4f4"/><rect x="3" y="11.5" width="1.2" height="1.1" fill="#d8d8d8"/><rect x="5" y="11.5" width="2" height="1.1" fill="#f4f4f4"/><rect x="8.3" y="11.5" width="1.6" height="1.1" fill="#c9c9c9"/><rect x="11.3" y="11.5" width="2" height="1.1" fill="#f4f4f4"/></svg></div><div class="btn" style="left:1265px;top:470px"><svg viewBox="0 0 16 16"><path d="M6 2.5H15M6 7.6H15M6 12.6H15" stroke="#333" stroke-width="1.3"/><text x="0.6" y="4.8" font-family="Liberation Sans,sans-serif" font-size="5.6" font-weight="bold" fill="#222">1</text><text x="0.6" y="9.9" font-family="Liberation Sans,sans-serif" font-size="5.6" font-weight="bold" fill="#222">2</text><text x="0.6" y="15" font-family="Liberation Sans,sans-serif" font-size="5.6" font-weight="bold" fill="#222">3</text></svg></div><div class="btn" style="left:1289px;top:470px"><svg viewBox="0 0 16 16"><rect x="2.4" y="1.1" width="10.2" height="14.4" fill="#d4d4d4" stroke="#7a7a7a" stroke-width=".9"/><rect x="2.8" y="1.4" width="9.4" height="1.1" fill="#fbfbfb"/><rect x="2.4" y="2.5" width="10.2" height="3.4" fill="#5c5c5c"/><rect x="3.4" y="3.4" width="7.2" height="1.6" fill="#a4a4a4"/><rect x="3.8" y="7.2" width="1" height="1" fill="#8a8a8a"/><rect x="5.9" y="7.2" width="1" height="1" fill="#8a8a8a"/><rect x="8" y="7.2" width="1" height="1" fill="#8a8a8a"/><rect x="10.1" y="7.2" width="1" height="1" fill="#8a8a8a"/><rect x="3.8" y="9.2" width="1" height="1" fill="#8a8a8a"/><rect x="5.9" y="9.2" width="1" height="1" fill="#8a8a8a"/><rect x="8" y="9.2" width="1" height="1" fill="#8a8a8a"/><rect x="10.1" y="9.2" width="1" height="1" fill="#8a8a8a"/><rect x="3.8" y="11.2" width="1" height="1" fill="#8a8a8a"/><rect x="5.9" y="11.2" width="1" height="1" fill="#8a8a8a"/><rect x="8" y="11.2" width="1" height="1" fill="#8a8a8a"/><rect x="10.1" y="11.2" width="1" height="1" fill="#8a8a8a"/><rect x="3.8" y="13.2" width="1" height="1" fill="#8a8a8a"/><rect x="5.9" y="13.2" width="1" height="1" fill="#8a8a8a"/><rect x="8" y="13.2" width="1" height="1" fill="#8a8a8a"/><rect x="10.1" y="13.2" width="1" height="1" fill="#8a8a8a"/><path d="M12.4 9.2V15.4M9.3 12.3H15.5" stroke="#474747" stroke-width="3" stroke-linecap="round"/><path d="M12.4 9.6V15M9.7 12.3H15.1" stroke="#8a8a8a" stroke-width="1.5" stroke-linecap="round"/></svg></div><div class="btn" style="left:1318px;top:470px"><svg viewBox="0 0 16 16"><path d="M.6 9.3L3.6 5.4H15.2L12.6 9.3Z" fill="#b3b3b3" stroke="#7c7c7c" stroke-width=".7"/><path d="M12.6 9.3L15.2 5.4V11L12.6 14.6Z" fill="#6f6f6f"/><rect x=".6" y="9.3" width="12" height="5.3" fill="#8b8b8b" stroke="#555" stroke-width=".7"/><rect x="1.4" y="10.6" width="10.4" height="1.7" fill="#f3f3f3"/><rect x=".9" y="13.2" width="11.4" height="1.4" fill="#4a4a4a"/><path d="M5.6 .9H13.6L11.4 7H2.9Z" fill="#f1f1f1" stroke="#8d8d8d" stroke-width=".8"/><path d="M6.8 2.6H11.2M6.2 4.2H10.4" stroke="#a4a4a4" stroke-width=".9"/></svg></div><div class="btn" style="left:1342px;top:470px"><svg viewBox="0 0 16 16"><rect x="1.5" y="1.6" width="13.8" height="12.8" fill="#dadada" stroke="#666" stroke-width="1.1"/><path d="M1.5 2H15.3" stroke="#5a5a5a" stroke-width="1.3"/><rect x="2.6" y="12" width="11.6" height="1.4" fill="#fafafa"/><path d="M4.2 5L13.2 11.6M12.6 5L5 11.6" stroke="#777" stroke-width="2"/><path d="M4.5 5.3H13" stroke="#8f8f8f" stroke-width="1"/></svg></div><div class="btn" style="left:1371px;top:470px"><svg viewBox="0 0 16 16"><rect x="1.7" y="1.7" width="12.4" height="12.4" fill="#fff" stroke="#0a0a0a" stroke-width="1.5"/><rect x="6" y="2.8" width="4" height="10.2" fill="#c4c4c4"/><rect x="2.8" y="2.8" width="10.2" height="3.4" fill="#cfcfcf" opacity=".75"/><path d="M5.8 2.8V13M10.2 2.8V9M2.8 6.4H13" stroke="#9a9a9a" stroke-width=".7"/><rect x="9.2" y="9.2" width="6.8" height="6.8" rx="1.6" fill="#9c9c9c"/><path d="M10.6 10.6L14.6 14.6M14.6 10.6L10.6 14.6" stroke="#fff" stroke-width="1.9"/></svg></div>
<div class="rc" style="left:1566px;top:471px"></div><div class="a" style="left:1582px;top:470px;white-space:nowrap;letter-spacing:-0.2px">Отм. (F6)</div>
<div class="fs" style="left:9px;top:516px;width:1625px;height:369px"></div>
<div class="lg" style="left:15px;top:506px">Строка заказа (продажа)</div>
<div class="tb" style="left:15px;top:522px;width:1615px;height:334px;border-color:#cfcfcf"><div class="hd" style="height:36px;"><div class="hc" style="left:0px;width:30px;height:34px;"><span>Проведен</span></div><div class="hc" style="left:30px;width:32px;height:34px;"><span>Закрыт</span></div><div class="hc" style="left:62px;width:55px;height:34px;"><span>Номер</span></div><div class="hc" style="left:117px;width:27px;height:34px;"><span>Серия</span></div><div class="hc w" style="left:144px;width:50px;height:34px;"><span>Дата<br>документа</span></div><div class="hc w" style="left:194px;width:52px;height:34px;"><span>Время<br>документа</span></div><div class="hc" style="left:246px;width:139px;height:34px;"><span>Поставщик</span></div><div class="hc w" style="left:385px;width:73px;height:34px;"><span>Склад<br>поставщика</span></div><div class="hc" style="left:458px;width:137px;height:34px;"><span>Покупатель</span></div><div class="hc w" style="left:595px;width:73px;height:34px;"><span>Склад<br>покупателя</span></div><div class="hc" style="left:668px;width:73px;height:34px;"><span>Код</span></div><div class="hc" style="left:741px;width:106px;height:34px;"><span>Штрихкод</span></div><div class="hc" style="left:847px;width:203px;height:34px;"><span>Наименование</span></div><div class="hc w" style="left:1050px;width:27px;height:34px;"><span>Ед.<br>изм.</span></div><div class="hc" style="left:1077px;width:54px;height:34px;"><span>Кол-во</span></div><div class="hc w" style="left:1131px;width:54px;height:34px;"><span>Кол-во<br>(поставлено)</span></div><div class="hc w" style="left:1185px;width:73px;height:34px;"><span>% исп.<br>заявки (кол-<br>во)</span></div><div class="hc" style="left:1258px;width:66px;height:34px;"><span>Сумма</span></div><div class="hc w" style="left:1324px;width:73px;height:34px;"><span>Сумма<br>(поставлено)</span></div><div class="hc w" style="left:1397px;width:73px;height:34px;"><span>% исп.<br>заявки<br>(сумма)</span></div><div class="hc w" style="left:1470px;width:60px;height:34px;"><span>Сумма<br>НДС</span></div><div class="hc w" style="left:1530px;width:65px;height:34px;"><span>Сумма с<br>НДС</span></div></div><div class="r s" style="top:36px;width:1595px"><div class="c" style="left:0px;width:30px;padding:0"><div class="cb" style="left:10px;top:1px"><svg viewBox="0 0 10 10"><path d="M2 4.2L4.5 6.6L9 2V4.8L4.5 9.3L2 6.9Z" fill="#000"/></svg></div></div><div class="c" style="left:30px;width:32px;padding:0"><div class="cb" style="left:10px;top:1px"><svg viewBox="0 0 10 10"><path d="M2 4.2L4.5 6.6L9 2V4.8L4.5 9.3L2 6.9Z" fill="#000"/></svg></div></div><div class="c" style="left:62px;width:55px;">расолькоир</div><div class="c g" style="left:117px;width:27px;">Не определено</div><div class="c" style="left:144px;width:50px;padding-left:6px">16.08.19</div><div class="c n" style="left:194px;width:52px;padding-right:4px;letter-spacing:-0.2px">0:00:00</div><div class="c" style="left:246px;width:139px;">ООО "ЛюксСофтОпт"</div><div class="c" style="left:385px;width:73px;">Магазин 11</div><div class="c" style="left:458px;width:137px;letter-spacing:-0.26px">УПРАВЛЕНИЕ СОЦ.ЗАЩИТЫ АДМИНИСТРАЦИИ</div><div class="c" style="left:595px;width:73px;">Склад УПРАВЛЕНИЕ СОЦ.ЗАЩИТЫ</div><div class="c" style="left:668px;width:73px;">6341</div><div class="c" style="left:741px;width:106px;">4810263027654</div><div class="c" style="left:847px;width:203px;letter-spacing:-0.27px">ДЕТ.ПИТ.СМЕСЬ БЕЛЛАКТ ОПТИМУМ 2 350Г</div><div class="c" style="left:1050px;width:27px;">шт.</div><div class="c n" style="left:1077px;width:54px;">4</div><div class="c n" style="left:1131px;width:54px;"></div><div class="c n" style="left:1185px;width:73px;"></div><div class="c n" style="left:1258px;width:66px;">13,44</div><div class="c n" style="left:1324px;width:73px;"></div><div class="c n" style="left:1397px;width:73px;"></div><div class="c n" style="left:1470px;width:60px;">1,72</div><div class="c n" style="left:1530px;width:65px;">15,16</div></div><div class="r" style="top:53px;width:1595px"><div class="c" style="left:0px;width:30px;padding:0"><div class="cb" style="left:10px;top:1px"><svg viewBox="0 0 10 10"><path d="M2 4.2L4.5 6.6L9 2V4.8L4.5 9.3L2 6.9Z" fill="#000"/></svg></div></div><div class="c" style="left:30px;width:32px;padding:0"><div class="cb" style="left:10px;top:1px"><svg viewBox="0 0 10 10"><path d="M2 4.2L4.5 6.6L9 2V4.8L4.5 9.3L2 6.9Z" fill="#000"/></svg></div></div><div class="c" style="left:62px;width:55px;">расолькоир</div><div class="c g" style="left:117px;width:27px;">Не определено</div><div class="c" style="left:144px;width:50px;padding-left:6px">16.08.19</div><div class="c n" style="left:194px;width:52px;padding-right:4px;letter-spacing:-0.2px">0:00:00</div><div class="c" style="left:246px;width:139px;">ООО "ЛюксСофтОпт"</div><div class="c" style="left:385px;width:73px;">Магазин 11</div><div class="c" style="left:458px;width:137px;letter-spacing:-0.26px">УПРАВЛЕНИЕ СОЦ.ЗАЩИТЫ АДМИНИСТРАЦИИ</div><div class="c" style="left:595px;width:73px;">Склад УПРАВЛЕНИЕ СОЦ.ЗАЩИТЫ</div><div class="c" style="left:668px;width:73px;">5580</div><div class="c" style="left:741px;width:106px;">4810263028774</div><div class="c" style="left:847px;width:203px;letter-spacing:-0.27px">ДЕТ.ПИТ.БЕЛЛАКТ КАША ГРЕЧНЕВАЯ Б/МОЛ</div><div class="c" style="left:1050px;width:27px;">шт.</div><div class="c n" style="left:1077px;width:54px;">3</div><div class="c n" style="left:1131px;width:54px;"></div><div class="c n" style="left:1185px;width:73px;"></div><div class="c n" style="left:1258px;width:66px;">4,15</div><div class="c n" style="left:1324px;width:73px;"></div><div class="c n" style="left:1397px;width:73px;"></div><div class="c n" style="left:1470px;width:60px;">0,53</div><div class="c n" style="left:1530px;width:65px;">4,68</div></div><div class="r" style="top:70px;width:1595px"><div class="c" style="left:0px;width:30px;padding:0"><div class="cb" style="left:10px;top:1px"><svg viewBox="0 0 10 10"><path d="M2 4.2L4.5 6.6L9 2V4.8L4.5 9.3L2 6.9Z" fill="#000"/></svg></div></div><div class="c" style="left:30px;width:32px;padding:0"><div class="cb" style="left:10px;top:1px"><svg viewBox="0 0 10 10"><path d="M2 4.2L4.5 6.6L9 2V4.8L4.5 9.3L2 6.9Z" fill="#000"/></svg></div></div><div class="c" style="left:62px;width:55px;">расолькоир</div><div class="c g" style="left:117px;width:27px;">Не определено</div><div class="c" style="left:144px;width:50px;padding-left:6px">16.08.19</div><div class="c n" style="left:194px;width:52px;padding-right:4px;letter-spacing:-0.2px">0:00:00</div><div class="c" style="left:246px;width:139px;">ООО "ЛюксСофтОпт"</div><div class="c" style="left:385px;width:73px;">Магазин 11</div><div class="c" style="left:458px;width:137px;letter-spacing:-0.26px">УПРАВЛЕНИЕ СОЦ.ЗАЩИТЫ АДМИНИСТРАЦИИ</div><div class="c" style="left:595px;width:73px;">Склад УПРАВЛЕНИЕ СОЦ.ЗАЩИТЫ</div><div class="c" style="left:668px;width:73px;">6386</div><div class="c" style="left:741px;width:106px;">4814716000720</div><div class="c" style="left:847px;width:203px;letter-spacing:-0.27px">ДЕТ.ПИТ.СОК БЕЛЛАКТ ЯБЛ/ГРУША 200МЛ</div><div class="c" style="left:1050px;width:27px;">шт.</div><div class="c n" style="left:1077px;width:54px;">4</div><div class="c n" style="left:1131px;width:54px;"></div><div class="c n" style="left:1185px;width:73px;"></div><div class="c n" style="left:1258px;width:66px;">2,38</div><div class="c n" style="left:1324px;width:73px;"></div><div class="c n" style="left:1397px;width:73px;"></div><div class="c n" style="left:1470px;width:60px;">0,3</div><div class="c n" style="left:1530px;width:65px;">2,68</div></div><div class="r" style="top:87px;width:1595px"><div class="c" style="left:0px;width:30px;padding:0"><div class="cb" style="left:10px;top:1px"><svg viewBox="0 0 10 10"><path d="M2 4.2L4.5 6.6L9 2V4.8L4.5 9.3L2 6.9Z" fill="#000"/></svg></div></div><div class="c" style="left:30px;width:32px;padding:0"><div class="cb" style="left:10px;top:1px"><svg viewBox="0 0 10 10"><path d="M2 4.2L4.5 6.6L9 2V4.8L4.5 9.3L2 6.9Z" fill="#000"/></svg></div></div><div class="c" style="left:62px;width:55px;">расолькоир</div><div class="c g" style="left:117px;width:27px;">Не определено</div><div class="c" style="left:144px;width:50px;padding-left:6px">16.08.19</div><div class="c n" style="left:194px;width:52px;padding-right:4px;letter-spacing:-0.2px">0:00:00</div><div class="c" style="left:246px;width:139px;">ООО "ЛюксСофтОпт"</div><div class="c" style="left:385px;width:73px;">Магазин 11</div><div class="c" style="left:458px;width:137px;letter-spacing:-0.26px">УПРАВЛЕНИЕ СОЦ.ЗАЩИТЫ АДМИНИСТРАЦИИ</div><div class="c" style="left:595px;width:73px;">Склад УПРАВЛЕНИЕ СОЦ.ЗАЩИТЫ</div><div class="c" style="left:668px;width:73px;">6382</div><div class="c" style="left:741px;width:106px;">4814716000744</div><div class="c" style="left:847px;width:203px;letter-spacing:-0.27px">ДЕТ.ПИТ.СОК БЕЛЛАКТ БАНАНОВЫЙ 200МЛ</div><div class="c" style="left:1050px;width:27px;">шт.</div><div class="c n" style="left:1077px;width:54px;">2</div><div class="c n" style="left:1131px;width:54px;"></div><div class="c n" style="left:1185px;width:73px;"></div><div class="c n" style="left:1258px;width:66px;">1,19</div><div class="c n" style="left:1324px;width:73px;"></div><div class="c n" style="left:1397px;width:73px;"></div><div class="c n" style="left:1470px;width:60px;">0,15</div><div class="c n" style="left:1530px;width:65px;">1,34</div></div><div class="r" style="top:104px;width:1595px"><div class="c" style="left:0px;width:30px;padding:0"><div class="cb" style="left:10px;top:1px"><svg viewBox="0 0 10 10"><path d="M2 4.2L4.5 6.6L9 2V4.8L4.5 9.3L2 6.9Z" fill="#000"/></svg></div></div><div class="c" style="left:30px;width:32px;padding:0"><div class="cb" style="left:10px;top:1px"><svg viewBox="0 0 10 10"><path d="M2 4.2L4.5 6.6L9 2V4.8L4.5 9.3L2 6.9Z" fill="#000"/></svg></div></div><div class="c" style="left:62px;width:55px;">расолькоир</div><div class="c g" style="left:117px;width:27px;">Не определено</div><div class="c" style="left:144px;width:50px;padding-left:6px">16.08.19</div><div class="c n" style="left:194px;width:52px;padding-right:4px;letter-spacing:-0.2px">0:00:00</div><div class="c" style="left:246px;width:139px;">ООО "ЛюксСофтОпт"</div><div class="c" style="left:385px;width:73px;">Магазин 11</div><div class="c" style="left:458px;width:137px;letter-spacing:-0.26px">УПРАВЛЕНИЕ СОЦ.ЗАЩИТЫ АДМИНИСТРАЦИИ</div><div class="c" style="left:595px;width:73px;">Склад УПРАВЛЕНИЕ СОЦ.ЗАЩИТЫ</div><div class="c" style="left:668px;width:73px;">5997</div><div class="c" style="left:741px;width:106px;">4810797030250</div><div class="c" style="left:847px;width:203px;letter-spacing:-0.27px">ДЕТ.ПИТ.НЕКТАР ТОПТЫШКА ЯБЛ/БАНАН</div><div class="c" style="left:1050px;width:27px;">шт.</div><div class="c n" style="left:1077px;width:54px;">3</div><div class="c n" style="left:1131px;width:54px;"></div><div class="c n" style="left:1185px;width:73px;"></div><div class="c n" style="left:1258px;width:66px;">2,26</div><div class="c n" style="left:1324px;width:73px;"></div><div class="c n" style="left:1397px;width:73px;"></div><div class="c n" style="left:1470px;width:60px;">0,29</div><div class="c n" style="left:1530px;width:65px;">2,55</div></div><div class="r" style="top:121px;width:1595px"><div class="c" style="left:0px;width:30px;padding:0"><div class="cb" style="left:10px;top:1px"><svg viewBox="0 0 10 10"><path d="M2 4.2L4.5 6.6L9 2V4.8L4.5 9.3L2 6.9Z" fill="#000"/></svg></div></div><div class="c" style="left:30px;width:32px;padding:0"><div class="cb" style="left:10px;top:1px"><svg viewBox="0 0 10 10"><path d="M2 4.2L4.5 6.6L9 2V4.8L4.5 9.3L2 6.9Z" fill="#000"/></svg></div></div><div class="c" style="left:62px;width:55px;">расолькоир</div><div class="c g" style="left:117px;width:27px;">Не определено</div><div class="c" style="left:144px;width:50px;padding-left:6px">16.08.19</div><div class="c n" style="left:194px;width:52px;padding-right:4px;letter-spacing:-0.2px">0:00:00</div><div class="c" style="left:246px;width:139px;">ООО "ЛюксСофтОпт"</div><div class="c" style="left:385px;width:73px;">Магазин 11</div><div class="c" style="left:458px;width:137px;letter-spacing:-0.26px">УПРАВЛЕНИЕ СОЦ.ЗАЩИТЫ АДМИНИСТРАЦИИ</div><div class="c" style="left:595px;width:73px;">Склад УПРАВЛЕНИЕ СОЦ.ЗАЩИТЫ</div><div class="c" style="left:668px;width:73px;">6214</div><div class="c" style="left:741px;width:106px;">4813163000611</div><div class="c" style="left:847px;width:203px;letter-spacing:-0.27px">ДЕТ.ПИТ.ПЮРЕ МАЛ.СЧАСТЬЕ ЯБЛОКО</div><div class="c" style="left:1050px;width:27px;">шт.</div><div class="c n" style="left:1077px;width:54px;">12</div><div class="c n" style="left:1131px;width:54px;"></div><div class="c n" style="left:1185px;width:73px;"></div><div class="c n" style="left:1258px;width:66px;">9,04</div><div class="c n" style="left:1324px;width:73px;"></div><div class="c n" style="left:1397px;width:73px;"></div><div class="c n" style="left:1470px;width:60px;">1,16</div><div class="c n" style="left:1530px;width:65px;">10,2</div></div><div class="r" style="top:138px;width:1595px"><div class="c" style="left:0px;width:30px;padding:0"><div class="cb" style="left:10px;top:1px"><svg viewBox="0 0 10 10"><path d="M2 4.2L4.5 6.6L9 2V4.8L4.5 9.3L2 6.9Z" fill="#000"/></svg></div></div><div class="c" style="left:30px;width:32px;padding:0"><div class="cb" style="left:10px;top:1px"><svg viewBox="0 0 10 10"><path d="M2 4.2L4.5 6.6L9 2V4.8L4.5 9.3L2 6.9Z" fill="#000"/></svg></div></div><div class="c" style="left:62px;width:55px;">расолькоир</div><div class="c g" style="left:117px;width:27px;">Не определено</div><div class="c" style="left:144px;width:50px;padding-left:6px">16.08.19</div><div class="c n" style="left:194px;width:52px;padding-right:4px;letter-spacing:-0.2px">0:00:00</div><div class="c" style="left:246px;width:139px;">ООО "ЛюксСофтОпт"</div><div class="c" style="left:385px;width:73px;">Магазин 11</div><div class="c" style="left:458px;width:137px;letter-spacing:-0.26px">УПРАВЛЕНИЕ СОЦ.ЗАЩИТЫ АДМИНИСТРАЦИИ</div><div class="c" style="left:595px;width:73px;">Склад УПРАВЛЕНИЕ СОЦ.ЗАЩИТЫ</div><div class="c" style="left:668px;width:73px;">6152</div><div class="c" style="left:741px;width:106px;">4814716000164</div><div class="c" style="left:847px;width:203px;letter-spacing:-0.27px">ДЕТ.ПИТ.ПЮРЕ БЕЛЛАКТ СЛИВА РБ 100Г</div><div class="c" style="left:1050px;width:27px;">шт.</div><div class="c n" style="left:1077px;width:54px;">18</div><div class="c n" style="left:1131px;width:54px;"></div><div class="c n" style="left:1185px;width:73px;"></div><div class="c n" style="left:1258px;width:66px;">13,56</div><div class="c n" style="left:1324px;width:73px;"></div><div class="c n" style="left:1397px;width:73px;"></div><div class="c n" style="left:1470px;width:60px;">1,74</div><div class="c n" style="left:1530px;width:65px;">15,3</div></div><div class="r" style="top:155px;width:1595px"><div class="c" style="left:0px;width:30px;padding:0"><div class="cb" style="left:10px;top:1px"><svg viewBox="0 0 10 10"><path d="M2 4.2L4.5 6.6L9 2V4.8L4.5 9.3L2 6.9Z" fill="#000"/></svg></div></div><div class="c" style="left:30px;width:32px;padding:0"><div class="cb" style="left:10px;top:1px"><svg viewBox="0 0 10 10"><path d="M2 4.2L4.5 6.6L9 2V4.8L4.5 9.3L2 6.9Z" fill="#000"/></svg></div></div><div class="c" style="left:62px;width:55px;">расолькоир</div><div class="c g" style="left:117px;width:27px;">Не определено</div><div class="c" style="left:144px;width:50px;padding-left:6px">16.08.19</div><div class="c n" style="left:194px;width:52px;padding-right:4px;letter-spacing:-0.2px">0:00:00</div><div class="c" style="left:246px;width:139px;">ООО "ЛюксСофтОпт"</div><div class="c" style="left:385px;width:73px;">Магазин 11</div><div class="c" style="left:458px;width:137px;letter-spacing:-0.26px">УПРАВЛЕНИЕ СОЦ.ЗАЩИТЫ АДМИНИСТРАЦИИ</div><div class="c" style="left:595px;width:73px;">Склад УПРАВЛЕНИЕ СОЦ.ЗАЩИТЫ</div><div class="c" style="left:668px;width:73px;">5455</div><div class="c" style="left:741px;width:106px;">4810390000148</div><div class="c" style="left:847px;width:203px;letter-spacing:-0.27px">ДЕТ.ПИТ.АБИБОК ПЮРЕ КАП.БРОККОЛИ</div><div class="c" style="left:1050px;width:27px;">шт.</div><div class="c n" style="left:1077px;width:54px;">14</div><div class="c n" style="left:1131px;width:54px;"></div><div class="c n" style="left:1185px;width:73px;"></div><div class="c n" style="left:1258px;width:66px;">13,9</div><div class="c n" style="left:1324px;width:73px;"></div><div class="c n" style="left:1397px;width:73px;"></div><div class="c n" style="left:1470px;width:60px;">1,78</div><div class="c n" style="left:1530px;width:65px;">15,68</div></div><div class="r" style="top:172px;width:1595px"><div class="c" style="left:0px;width:30px;padding:0"><div class="cb" style="left:10px;top:1px"><svg viewBox="0 0 10 10"><path d="M2 4.2L4.5 6.6L9 2V4.8L4.5 9.3L2 6.9Z" fill="#000"/></svg></div></div><div class="c" style="left:30px;width:32px;padding:0"><div class="cb" style="left:10px;top:1px"><svg viewBox="0 0 10 10"><path d="M2 4.2L4.5 6.6L9 2V4.8L4.5 9.3L2 6.9Z" fill="#000"/></svg></div></div><div class="c" style="left:62px;width:55px;">расолькоир</div><div class="c g" style="left:117px;width:27px;">Не определено</div><div class="c" style="left:144px;width:50px;padding-left:6px">16.08.19</div><div class="c n" style="left:194px;width:52px;padding-right:4px;letter-spacing:-0.2px">0:00:00</div><div class="c" style="left:246px;width:139px;">ООО "ЛюксСофтОпт"</div><div class="c" style="left:385px;width:73px;">Магазин 11</div><div class="c" style="left:458px;width:137px;letter-spacing:-0.26px">УПРАВЛЕНИЕ СОЦ.ЗАЩИТЫ АДМИНИСТРАЦИИ</div><div class="c" style="left:595px;width:73px;">Склад УПРАВЛЕНИЕ СОЦ.ЗАЩИТЫ</div><div class="c" style="left:668px;width:73px;">6055</div><div class="c" style="left:741px;width:106px;">4810821017745</div><div class="c" style="left:847px;width:203px;letter-spacing:-0.27px">ДЕТ.ПИТ.НЕПОСЕДА ПЮРЕ ЯБЛОКО Б/САХ</div><div class="c" style="left:1050px;width:27px;">шт.</div><div class="c n" style="left:1077px;width:54px;">9</div><div class="c n" style="left:1131px;width:54px;"></div><div class="c n" style="left:1185px;width:73px;"></div><div class="c n" style="left:1258px;width:66px;">6,78</div><div class="c n" style="left:1324px;width:73px;"></div><div class="c n" style="left:1397px;width:73px;"></div><div class="c n" style="left:1470px;width:60px;">0,87</div><div class="c n" style="left:1530px;width:65px;">7,65</div></div><div class="r" style="top:189px;width:1595px"><div class="c" style="left:0px;width:30px;padding:0"><div class="cb" style="left:10px;top:1px"><svg viewBox="0 0 10 10"><path d="M2 4.2L4.5 6.6L9 2V4.8L4.5 9.3L2 6.9Z" fill="#000"/></svg></div></div><div class="c" style="left:30px;width:32px;padding:0"><div class="cb" style="left:10px;top:1px"><svg viewBox="0 0 10 10"><path d="M2 4.2L4.5 6.6L9 2V4.8L4.5 9.3L2 6.9Z" fill="#000"/></svg></div></div><div class="c" style="left:62px;width:55px;">расолькоир</div><div class="c g" style="left:117px;width:27px;">Не определено</div><div class="c" style="left:144px;width:50px;padding-left:6px">16.08.19</div><div class="c n" style="left:194px;width:52px;padding-right:4px;letter-spacing:-0.2px">0:00:00</div><div class="c" style="left:246px;width:139px;">ООО "ЛюксСофтОпт"</div><div class="c" style="left:385px;width:73px;">Магазин 11</div><div class="c" style="left:458px;width:137px;letter-spacing:-0.26px">УПРАВЛЕНИЕ СОЦ.ЗАЩИТЫ АДМИНИСТРАЦИИ</div><div class="c" style="left:595px;width:73px;">Склад УПРАВЛЕНИЕ СОЦ.ЗАЩИТЫ</div><div class="c" style="left:668px;width:73px;">6131</div><div class="c" style="left:741px;width:106px;">4814716001048</div><div class="c" style="left:847px;width:203px;letter-spacing:-0.27px">ДЕТ.ПИТ.ПЮРЕ БЕЛЛАКТ ГОВЯДИНА 90Г</div><div class="c" style="left:1050px;width:27px;">шт.</div><div class="c n" style="left:1077px;width:54px;">10</div><div class="c n" style="left:1131px;width:54px;"></div><div class="c n" style="left:1185px;width:73px;"></div><div class="c n" style="left:1258px;width:66px;">17,82</div><div class="c n" style="left:1324px;width:73px;"></div><div class="c n" style="left:1397px;width:73px;"></div><div class="c n" style="left:1470px;width:60px;">2,28</div><div class="c n" style="left:1530px;width:65px;">20,1</div></div><div class="r" style="top:206px;width:1595px"><div class="c" style="left:0px;width:30px;padding:0"><div class="cb" style="left:10px;top:1px"><svg viewBox="0 0 10 10"><path d="M2 4.2L4.5 6.6L9 2V4.8L4.5 9.3L2 6.9Z" fill="#000"/></svg></div></div><div class="c" style="left:30px;width:32px;padding:0"><div class="cb" style="left:10px;top:1px"><svg viewBox="0 0 10 10"><path d="M2 4.2L4.5 6.6L9 2V4.8L4.5 9.3L2 6.9Z" fill="#000"/></svg></div></div><div class="c" style="left:62px;width:55px;">давыдкир</div><div class="c g" style="left:117px;width:27px;">Не определено</div><div class="c" style="left:144px;width:50px;padding-left:6px">16.08.19</div><div class="c n" style="left:194px;width:52px;padding-right:4px;letter-spacing:-0.2px">0:00:00</div><div class="c" style="left:246px;width:139px;">ООО "ЛюксСофтОпт"</div><div class="c" style="left:385px;width:73px;">Магазин 11</div><div class="c" style="left:458px;width:137px;letter-spacing:-0.26px">УПРАВЛЕНИЕ СОЦ.ЗАЩИТЫ АДМИНИСТРАЦИИ</div><div class="c" style="left:595px;width:73px;">Склад УПРАВЛЕНИЕ СОЦ.ЗАЩИТЫ</div><div class="c" style="left:668px;width:73px;">5956</div><div class="c" style="left:741px;width:106px;">4810263026848</div><div class="c" style="left:847px;width:203px;letter-spacing:-0.27px">ДЕТ.ПИТ.НАП.МОЛ.БЕЛЛАКТ ИММУНИС</div><div class="c" style="left:1050px;width:27px;">шт.</div><div class="c n" style="left:1077px;width:54px;">2</div><div class="c n" style="left:1131px;width:54px;"></div><div class="c n" style="left:1185px;width:73px;"></div><div class="c n" style="left:1258px;width:66px;">7</div><div class="c n" style="left:1324px;width:73px;"></div><div class="c n" style="left:1397px;width:73px;"></div><div class="c n" style="left:1470px;width:60px;">0,9</div><div class="c n" style="left:1530px;width:65px;">7,9</div></div><div class="r" style="top:223px;width:1595px"><div class="c" style="left:0px;width:30px;padding:0"><div class="cb" style="left:10px;top:1px"><svg viewBox="0 0 10 10"><path d="M2 4.2L4.5 6.6L9 2V4.8L4.5 9.3L2 6.9Z" fill="#000"/></svg></div></div><div class="c" style="left:30px;width:32px;padding:0"><div class="cb" style="left:10px;top:1px"><svg viewBox="0 0 10 10"><path d="M2 4.2L4.5 6.6L9 2V4.8L4.5 9.3L2 6.9Z" fill="#000"/></svg></div></div><div class="c" style="left:62px;width:55px;">давыдкир</div><div class="c g" style="left:117px;width:27px;">Не определено</div><div class="c" style="left:144px;width:50px;padding-left:6px">16.08.19</div><div class="c n" style="left:194px;width:52px;padding-right:4px;letter-spacing:-0.2px">0:00:00</div><div class="c" style="left:246px;width:139px;">ООО "ЛюксСофтОпт"</div><div class="c" style="left:385px;width:73px;">Магазин 11</div><div class="c" style="left:458px;width:137px;letter-spacing:-0.26px">УПРАВЛЕНИЕ СОЦ.ЗАЩИТЫ АДМИНИСТРАЦИИ</div><div class="c" style="left:595px;width:73px;">Склад УПРАВЛЕНИЕ СОЦ.ЗАЩИТЫ</div><div class="c" style="left:668px;width:73px;">5607</div><div class="c" style="left:741px;width:106px;">4810263028798</div><div class="c" style="left:847px;width:203px;letter-spacing:-0.27px">ДЕТ.ПИТ.БЕЛЛАКТ КАША ПШЕН/АБР/ЯБЛ</div><div class="c" style="left:1050px;width:27px;">шт.</div><div class="c n" style="left:1077px;width:54px;">2</div><div class="c n" style="left:1131px;width:54px;"></div><div class="c n" style="left:1185px;width:73px;"></div><div class="c n" style="left:1258px;width:66px;">2,77</div><div class="c n" style="left:1324px;width:73px;"></div><div class="c n" style="left:1397px;width:73px;"></div><div class="c n" style="left:1470px;width:60px;">0,35</div><div class="c n" style="left:1530px;width:65px;">3,12</div></div><div class="r" style="top:240px;width:1595px"><div class="c" style="left:0px;width:30px;padding:0"><div class="cb" style="left:10px;top:1px"><svg viewBox="0 0 10 10"><path d="M2 4.2L4.5 6.6L9 2V4.8L4.5 9.3L2 6.9Z" fill="#000"/></svg></div></div><div class="c" style="left:30px;width:32px;padding:0"><div class="cb" style="left:10px;top:1px"><svg viewBox="0 0 10 10"><path d="M2 4.2L4.5 6.6L9 2V4.8L4.5 9.3L2 6.9Z" fill="#000"/></svg></div></div><div class="c" style="left:62px;width:55px;">давыдкир</div><div class="c g" style="left:117px;width:27px;">Не определено</div><div class="c" style="left:144px;width:50px;padding-left:6px">16.08.19</div><div class="c n" style="left:194px;width:52px;padding-right:4px;letter-spacing:-0.2px">0:00:00</div><div class="c" style="left:246px;width:139px;">ООО "ЛюксСофтОпт"</div><div class="c" style="left:385px;width:73px;">Магазин 11</div><div class="c" style="left:458px;width:137px;letter-spacing:-0.26px">УПРАВЛЕНИЕ СОЦ.ЗАЩИТЫ АДМИНИСТРАЦИИ</div><div class="c" style="left:595px;width:73px;">Склад УПРАВЛЕНИЕ СОЦ.ЗАЩИТЫ</div><div class="c" style="left:668px;width:73px;">5610</div><div class="c" style="left:741px;width:106px;">4810263028767</div><div class="c" style="left:847px;width:203px;letter-spacing:-0.27px">ДЕТ.ПИТ.БЕЛЛАКТ КАША РИС/ГРЕЧ/ЧЕРН</div><div class="c" style="left:1050px;width:27px;">шт.</div><div class="c n" style="left:1077px;width:54px;">1</div><div class="c n" style="left:1131px;width:54px;"></div><div class="c n" style="left:1185px;width:73px;"></div><div class="c n" style="left:1258px;width:66px;">1,59</div><div class="c n" style="left:1324px;width:73px;"></div><div class="c n" style="left:1397px;width:73px;"></div><div class="c n" style="left:1470px;width:60px;">0,2</div><div class="c n" style="left:1530px;width:65px;">1,79</div></div><div class="r" style="top:257px;width:1595px"><div class="c" style="left:0px;width:30px;padding:0"><div class="cb" style="left:10px;top:1px"><svg viewBox="0 0 10 10"><path d="M2 4.2L4.5 6.6L9 2V4.8L4.5 9.3L2 6.9Z" fill="#000"/></svg></div></div><div class="c" style="left:30px;width:32px;padding:0"><div class="cb" style="left:10px;top:1px"><svg viewBox="0 0 10 10"><path d="M2 4.2L4.5 6.6L9 2V4.8L4.5 9.3L2 6.9Z" fill="#000"/></svg></div></div><div class="c" style="left:62px;width:55px;">давыдкир</div><div class="c g" style="left:117px;width:27px;">Не определено</div><div class="c" style="left:144px;width:50px;padding-left:6px">16.08.19</div><div class="c n" style="left:194px;width:52px;padding-right:4px;letter-spacing:-0.2px">0:00:00</div><div class="c" style="left:246px;width:139px;">ООО "ЛюксСофтОпт"</div><div class="c" style="left:385px;width:73px;">Магазин 11</div><div class="c" style="left:458px;width:137px;letter-spacing:-0.26px">УПРАВЛЕНИЕ СОЦ.ЗАЩИТЫ АДМИНИСТРАЦИИ</div><div class="c" style="left:595px;width:73px;">Склад УПРАВЛЕНИЕ СОЦ.ЗАЩИТЫ</div><div class="c" style="left:668px;width:73px;">6382</div><div class="c" style="left:741px;width:106px;">4814716000744</div><div class="c" style="left:847px;width:203px;letter-spacing:-0.27px">ДЕТ.ПИТ.СОК БЕЛЛАКТ БАНАНОВЫЙ 200МЛ</div><div class="c" style="left:1050px;width:27px;">шт.</div><div class="c n" style="left:1077px;width:54px;">11</div><div class="c n" style="left:1131px;width:54px;"></div><div class="c n" style="left:1185px;width:73px;"></div><div class="c n" style="left:1258px;width:66px;">6,53</div><div class="c n" style="left:1324px;width:73px;"></div><div class="c n" style="left:1397px;width:73px;"></div><div class="c n" style="left:1470px;width:60px;">0,84</div><div class="c n" style="left:1530px;width:65px;">7,37</div></div><div class="r" style="top:274px;width:1595px"><div class="c" style="left:0px;width:30px;padding:0"><div class="cb" style="left:10px;top:1px"><svg viewBox="0 0 10 10"><path d="M2 4.2L4.5 6.6L9 2V4.8L4.5 9.3L2 6.9Z" fill="#000"/></svg></div></div><div class="c" style="left:30px;width:32px;padding:0"><div class="cb" style="left:10px;top:1px"><svg viewBox="0 0 10 10"><path d="M2 4.2L4.5 6.6L9 2V4.8L4.5 9.3L2 6.9Z" fill="#000"/></svg></div></div><div class="c" style="left:62px;width:55px;">давыдкир</div><div class="c g" style="left:117px;width:27px;">Не определено</div><div class="c" style="left:144px;width:50px;padding-left:6px">16.08.19</div><div class="c n" style="left:194px;width:52px;padding-right:4px;letter-spacing:-0.2px">0:00:00</div><div class="c" style="left:246px;width:139px;">ООО "ЛюксСофтОпт"</div><div class="c" style="left:385px;width:73px;">Магазин 11</div><div class="c" style="left:458px;width:137px;letter-spacing:-0.26px">УПРАВЛЕНИЕ СОЦ.ЗАЩИТЫ АДМИНИСТРАЦИИ</div><div class="c" style="left:595px;width:73px;">Склад УПРАВЛЕНИЕ СОЦ.ЗАЩИТЫ</div><div class="c" style="left:668px;width:73px;">6386</div><div class="c" style="left:741px;width:106px;">4814716000720</div><div class="c" style="left:847px;width:203px;letter-spacing:-0.27px">ДЕТ.ПИТ.СОК БЕЛЛАКТ ЯБЛ/ГРУША 200МЛ</div><div class="c" style="left:1050px;width:27px;">шт.</div><div class="c n" style="left:1077px;width:54px;">4</div><div class="c n" style="left:1131px;width:54px;"></div><div class="c n" style="left:1185px;width:73px;"></div><div class="c n" style="left:1258px;width:66px;">2,38</div><div class="c n" style="left:1324px;width:73px;"></div><div class="c n" style="left:1397px;width:73px;"></div><div class="c n" style="left:1470px;width:60px;">0,3</div><div class="c n" style="left:1530px;width:65px;">2,68</div></div><div class="r" style="top:291px;width:1595px"><div class="c" style="left:0px;width:30px;padding:0"><div class="cb" style="left:10px;top:1px"><svg viewBox="0 0 10 10"><path d="M2 4.2L4.5 6.6L9 2V4.8L4.5 9.3L2 6.9Z" fill="#000"/></svg></div></div><div class="c" style="left:30px;width:32px;padding:0"><div class="cb" style="left:10px;top:1px"><svg viewBox="0 0 10 10"><path d="M2 4.2L4.5 6.6L9 2V4.8L4.5 9.3L2 6.9Z" fill="#000"/></svg></div></div><div class="c" style="left:62px;width:55px;">давыдкир</div><div class="c g" style="left:117px;width:27px;">Не определено</div><div class="c" style="left:144px;width:50px;padding-left:6px">16.08.19</div><div class="c n" style="left:194px;width:52px;padding-right:4px;letter-spacing:-0.2px">0:00:00</div><div class="c" style="left:246px;width:139px;">ООО "ЛюксСофтОпт"</div><div class="c" style="left:385px;width:73px;">Магазин 11</div><div class="c" style="left:458px;width:137px;letter-spacing:-0.26px">УПРАВЛЕНИЕ СОЦ.ЗАЩИТЫ АДМИНИСТРАЦИИ</div><div class="c" style="left:595px;width:73px;">Склад УПРАВЛЕНИЕ СОЦ.ЗАЩИТЫ</div><div class="c" style="left:668px;width:73px;">6194</div><div class="c" style="left:741px;width:106px;">4813163000628</div><div class="c" style="left:847px;width:203px;letter-spacing:-0.27px">ДЕТ.ПИТ.ПЮРЕ МАЛ.СЧАСТЬЕ ГРУША</div><div class="c" style="left:1050px;width:27px;">шт.</div><div class="c n" style="left:1077px;width:54px;">12</div><div class="c n" style="left:1131px;width:54px;"></div><div class="c n" style="left:1185px;width:73px;"></div><div class="c n" style="left:1258px;width:66px;">9,89</div><div class="c n" style="left:1324px;width:73px;"></div><div class="c n" style="left:1397px;width:73px;"></div><div class="c n" style="left:1470px;width:60px;">1,27</div><div class="c n" style="left:1530px;width:65px;">11,16</div></div><div class="r" style="top:308px;width:1595px"><div class="c" style="left:0px;width:30px;padding:0"><div class="cb" style="left:10px;top:1px"><svg viewBox="0 0 10 10"><path d="M2 4.2L4.5 6.6L9 2V4.8L4.5 9.3L2 6.9Z" fill="#000"/></svg></div></div><div class="c" style="left:30px;width:32px;padding:0"><div class="cb" style="left:10px;top:1px"><svg viewBox="0 0 10 10"><path d="M2 4.2L4.5 6.6L9 2V4.8L4.5 9.3L2 6.9Z" fill="#000"/></svg></div></div><div class="c" style="left:62px;width:55px;">давыдкир</div><div class="c g" style="left:117px;width:27px;">Не определено</div><div class="c" style="left:144px;width:50px;padding-left:6px">16.08.19</div><div class="c n" style="left:194px;width:52px;padding-right:4px;letter-spacing:-0.2px">0:00:00</div><div class="c" style="left:246px;width:139px;">ООО "ЛюксСофтОпт"</div><div class="c" style="left:385px;width:73px;">Магазин 11</div><div class="c" style="left:458px;width:137px;letter-spacing:-0.26px">УПРАВЛЕНИЕ СОЦ.ЗАЩИТЫ АДМИНИСТРАЦИИ</div><div class="c" style="left:595px;width:73px;">Склад УПРАВЛЕНИЕ СОЦ.ЗАЩИТЫ</div><div class="c" style="left:668px;width:73px;">6207</div><div class="c" style="left:741px;width:106px;">4813163001243</div><div class="c" style="left:847px;width:203px;letter-spacing:-0.27px">ДЕТ.ПИТ.ПЮРЕ МАЛ.СЧАСТЬЕ ЦВ.КАПУСТА</div><div class="c" style="left:1050px;width:27px;">шт.</div><div class="c n" style="left:1077px;width:54px;">9</div><div class="c n" style="left:1131px;width:54px;"></div><div class="c n" style="left:1185px;width:73px;"></div><div class="c n" style="left:1258px;width:66px;">9,18</div><div class="c n" style="left:1324px;width:73px;"></div><div class="c n" style="left:1397px;width:73px;"></div><div class="c n" style="left:1470px;width:60px;">1,17</div><div class="c n" style="left:1530px;width:65px;">10,35</div></div><div class="r" style="top:325px;width:1595px"><div class="c" style="left:0px;width:30px;padding:0"><div class="cb" style="left:10px;top:1px"><svg viewBox="0 0 10 10"><path d="M2 4.2L4.5 6.6L9 2V4.8L4.5 9.3L2 6.9Z" fill="#000"/></svg></div></div><div class="c" style="left:30px;width:32px;padding:0"><div class="cb" style="left:10px;top:1px"><svg viewBox="0 0 10 10"><path d="M2 4.2L4.5 6.6L9 2V4.8L4.5 9.3L2 6.9Z" fill="#000"/></svg></div></div><div class="c" style="left:62px;width:55px;">давыдкир</div><div class="c g" style="left:117px;width:27px;">Не определено</div><div class="c" style="left:144px;width:50px;padding-left:6px">16.08.19</div><div class="c n" style="left:194px;width:52px;padding-right:4px;letter-spacing:-0.2px">0:00:00</div><div class="c" style="left:246px;width:139px;">ООО "ЛюксСофтОпт"</div><div class="c" style="left:385px;width:73px;">Магазин 11</div><div class="c" style="left:458px;width:137px;letter-spacing:-0.26px">УПРАВЛЕНИЕ СОЦ.ЗАЩИТЫ АДМИНИСТРАЦИИ</div><div class="c" style="left:595px;width:73px;">Склад УПРАВЛЕНИЕ СОЦ.ЗАЩИТЫ</div><div class="c" style="left:668px;width:73px;">6155</div><div class="c" style="left:741px;width:106px;">4814716000027</div><div class="c" style="left:847px;width:203px;letter-spacing:-0.27px">ДЕТ.ПИТ.ПЮРЕ БЕЛЛАКТ ТЫКВА РБ 100Г</div><div class="c" style="left:1050px;width:27px;">шт.</div><div class="c n" style="left:1077px;width:54px;">8</div><div class="c n" style="left:1131px;width:54px;"></div><div class="c n" style="left:1185px;width:73px;"></div><div class="c n" style="left:1258px;width:66px;">5,82</div><div class="c n" style="left:1324px;width:73px;"></div><div class="c n" style="left:1397px;width:73px;"></div><div class="c n" style="left:1470px;width:60px;">0,74</div><div class="c n" style="left:1530px;width:65px;">6,56</div></div><div class="vs" style="left:1595px;top:36px;width:19px;bottom:0"></div><div class="th" style="left:1598px;top:53px;width:13px;height:34px"></div><svg class="a" style="left:1601px;top:43px" width="7" height="4" viewBox="0 0 7 4"><path d="M0 4H7L3.5 0Z" fill="#a3a3a3"/></svg><svg class="a" style="left:1601px;top:321px" width="7" height="4" viewBox="0 0 7 4"><path d="M0 0H7L3.5 4Z" fill="#505050"/></svg></div>
<div class="btn" style="left:16px;top:860px"><svg viewBox="0 0 16 16"><path d="M1.2 2.9H11.8L8 6.6V9.6H5V6.6Z" fill="#c9cfcf" stroke="#3d4747" stroke-width="1.2" stroke-linejoin="round"/><path d="M5 8.3H8V9.9H5Z" fill="#3d4747"/><path d="M10.5 9V13.9M8 11.45H13" stroke="#444" stroke-width="1.05"/></svg></div><div class="btn" style="left:45px;top:860px"><svg viewBox="0 0 16 16"><rect x=".6" y=".7" width="14.9" height="14" fill="#f8f8f8" stroke="#8c8c8c" stroke-width="1"/><rect x="2.2" y="2.2" width="11.7" height="10.8" fill="#b2b2b2"/><rect x="7.6" y="2.4" width="3" height="10.4" fill="#8c8c8c" stroke="#454545" stroke-width=".9"/><rect x="3" y="3.3" width="1.2" height="1.1" fill="#d8d8d8"/><rect x="5" y="3.3" width="2" height="1.1" fill="#f4f4f4"/><rect x="8.3" y="3.3" width="1.6" height="1.1" fill="#c9c9c9"/><rect x="11.3" y="3.3" width="2" height="1.1" fill="#f4f4f4"/><rect x="3" y="5.4" width="1.2" height="1.1" fill="#d8d8d8"/><rect x="5" y="5.4" width="2" height="1.1" fill="#f4f4f4"/><rect x="8.3" y="5.4" width="1.6" height="1.1" fill="#c9c9c9"/><rect x="11.3" y="5.4" width="2" height="1.1" fill="#f4f4f4"/><rect x="3" y="7.5" width="1.2" height="1.1" fill="#d8d8d8"/><rect x="5" y="7.5" width="2" height="1.1" fill="#f4f4f4"/><rect x="8.3" y="7.5" width="1.6" height="1.1" fill="#c9c9c9"/><rect x="11.3" y="7.5" width="2" height="1.1" fill="#f4f4f4"/><rect x="3" y="9.6" width="1.2" height="1.1" fill="#d8d8d8"/><rect x="5" y="9.6" width="2" height="1.1" fill="#f4f4f4"/><rect x="8.3" y="9.6" width="1.6" height="1.1" fill="#c9c9c9"/><rect x="11.3" y="9.6" width="2" height="1.1" fill="#f4f4f4"/><rect x="3" y="11.5" width="1.2" height="1.1" fill="#d8d8d8"/><rect x="5" y="11.5" width="2" height="1.1" fill="#f4f4f4"/><rect x="8.3" y="11.5" width="1.6" height="1.1" fill="#c9c9c9"/><rect x="11.3" y="11.5" width="2" height="1.1" fill="#f4f4f4"/></svg></div><div class="btn" style="left:69px;top:860px"><svg viewBox="0 0 16 16"><path d="M6 2.5H15M6 7.6H15M6 12.6H15" stroke="#333" stroke-width="1.3"/><text x="0.6" y="4.8" font-family="Liberation Sans,sans-serif" font-size="5.6" font-weight="bold" fill="#222">1</text><text x="0.6" y="9.9" font-family="Liberation Sans,sans-serif" font-size="5.6" font-weight="bold" fill="#222">2</text><text x="0.6" y="15" font-family="Liberation Sans,sans-serif" font-size="5.6" font-weight="bold" fill="#222">3</text></svg></div><div class="btn" style="left:93px;top:860px"><svg viewBox="0 0 16 16"><rect x="2.4" y="1.1" width="10.2" height="14.4" fill="#d4d4d4" stroke="#7a7a7a" stroke-width=".9"/><rect x="2.8" y="1.4" width="9.4" height="1.1" fill="#fbfbfb"/><rect x="2.4" y="2.5" width="10.2" height="3.4" fill="#5c5c5c"/><rect x="3.4" y="3.4" width="7.2" height="1.6" fill="#a4a4a4"/><rect x="3.8" y="7.2" width="1" height="1" fill="#8a8a8a"/><rect x="5.9" y="7.2" width="1" height="1" fill="#8a8a8a"/><rect x="8" y="7.2" width="1" height="1" fill="#8a8a8a"/><rect x="10.1" y="7.2" width="1" height="1" fill="#8a8a8a"/><rect x="3.8" y="9.2" width="1" height="1" fill="#8a8a8a"/><rect x="5.9" y="9.2" width="1" height="1" fill="#8a8a8a"/><rect x="8" y="9.2" width="1" height="1" fill="#8a8a8a"/><rect x="10.1" y="9.2" width="1" height="1" fill="#8a8a8a"/><rect x="3.8" y="11.2" width="1" height="1" fill="#8a8a8a"/><rect x="5.9" y="11.2" width="1" height="1" fill="#8a8a8a"/><rect x="8" y="11.2" width="1" height="1" fill="#8a8a8a"/><rect x="10.1" y="11.2" width="1" height="1" fill="#8a8a8a"/><rect x="3.8" y="13.2" width="1" height="1" fill="#8a8a8a"/><rect x="5.9" y="13.2" width="1" height="1" fill="#8a8a8a"/><rect x="8" y="13.2" width="1" height="1" fill="#8a8a8a"/><rect x="10.1" y="13.2" width="1" height="1" fill="#8a8a8a"/><path d="M12.4 9.2V15.4M9.3 12.3H15.5" stroke="#474747" stroke-width="3" stroke-linecap="round"/><path d="M12.4 9.6V15M9.7 12.3H15.1" stroke="#8a8a8a" stroke-width="1.5" stroke-linecap="round"/></svg></div><div class="btn" style="left:122px;top:860px"><svg viewBox="0 0 16 16"><path d="M.6 9.3L3.6 5.4H15.2L12.6 9.3Z" fill="#b3b3b3" stroke="#7c7c7c" stroke-width=".7"/><path d="M12.6 9.3L15.2 5.4V11L12.6 14.6Z" fill="#6f6f6f"/><rect x=".6" y="9.3" width="12" height="5.3" fill="#8b8b8b" stroke="#555" stroke-width=".7"/><rect x="1.4" y="10.6" width="10.4" height="1.7" fill="#f3f3f3"/><rect x=".9" y="13.2" width="11.4" height="1.4" fill="#4a4a4a"/><path d="M5.6 .9H13.6L11.4 7H2.9Z" fill="#f1f1f1" stroke="#8d8d8d" stroke-width=".8"/><path d="M6.8 2.6H11.2M6.2 4.2H10.4" stroke="#a4a4a4" stroke-width=".9"/></svg></div><div class="btn" style="left:146px;top:860px"><svg viewBox="0 0 16 16"><rect x="1.5" y="1.6" width="13.8" height="12.8" fill="#dadada" stroke="#666" stroke-width="1.1"/><path d="M1.5 2H15.3" stroke="#5a5a5a" stroke-width="1.3"/><rect x="2.6" y="12" width="11.6" height="1.4" fill="#fafafa"/><path d="M4.2 5L13.2 11.6M12.6 5L5 11.6" stroke="#777" stroke-width="2"/><path d="M4.5 5.3H13" stroke="#8f8f8f" stroke-width="1"/></svg></div><div class="btn" style="left:175px;top:860px"><svg viewBox="0 0 16 16"><rect x="1.7" y="1.7" width="12.4" height="12.4" fill="#fff" stroke="#0a0a0a" stroke-width="1.5"/><rect x="6" y="2.8" width="4" height="10.2" fill="#c4c4c4"/><rect x="2.8" y="2.8" width="10.2" height="3.4" fill="#cfcfcf" opacity=".75"/><path d="M5.8 2.8V13M10.2 2.8V9M2.8 6.4H13" stroke="#9a9a9a" stroke-width=".7"/><rect x="9.2" y="9.2" width="6.8" height="6.8" rx="1.6" fill="#9c9c9c"/><path d="M10.6 10.6L14.6 14.6M14.6 10.6L10.6 14.6" stroke="#fff" stroke-width="1.9"/></svg></div>
<div class="a" style="left:1415px;top:862px;width:106px;height:16px;border:1px solid #b5b5b5;border-radius:3px;background:linear-gradient(#fafafa,#e6e6e6);text-align:center;line-height:14px;letter-spacing:-0.2px;white-space:nowrap">Заполнить данные</div>
<div class="a" style="left:1526px;top:862px;width:100px;height:16px;border:1px solid #b5b5b5;border-radius:3px;background:linear-gradient(#fafafa,#e6e6e6);line-height:14px;letter-spacing:-0.2px;white-space:nowrap;padding-left:19px">Редактировать<svg class="a" style="left:4px;top:1px" width="13" height="12" viewBox="0 0 13 12"><path d="M1 11L10.5 1.5" stroke="#d9a441" stroke-width="2"/><path d="M10 2L11.5 0.8" stroke="#c44" stroke-width="2"/><path d="M0.6 11.4L2 10" stroke="#444" stroke-width="1.4"/></svg></div>
<svg class="a" style="left:0;top:0" width="1636" height="887" viewBox="0 0 1636 887"><path d="M1223.8 741.0L432.2 342.6" stroke="#c6272d" stroke-width="1.9" fill="none"/><path d="M421.5 337.2L436.9 337.7L431.1 349.3Z" fill="#e8202a"/><path d="M1261.7 740.2L828.6 337.1" stroke="#c6272d" stroke-width="1.9" fill="none"/><path d="M819.8 328.9L834.5 333.7L825.6 343.2Z" fill="#e8202a"/><path d="M1282.6 744.3L1567.8 364.0" stroke="#c6272d" stroke-width="1.9" fill="none"/><path d="M1575.0 354.4L1571.8 369.5L1561.4 361.7Z" fill="#e8202a"/><path d="M1380.0 806.3L1411.0 850.2" stroke="#c6272d" stroke-width="1.9" fill="none"/><path d="M1417.9 860.0L1404.5 852.3L1415.1 844.8Z" fill="#e8202a"/></svg>
<div class="a" style="left:1244px;top:757px;white-space:nowrap;color:#c4262c;font-weight:bold;font-size:13px;line-height:16px;letter-spacing:0.18px">Выбрать необходимое и нажать<br>кнопку "Заполнить данные"</div>
</body></html>
